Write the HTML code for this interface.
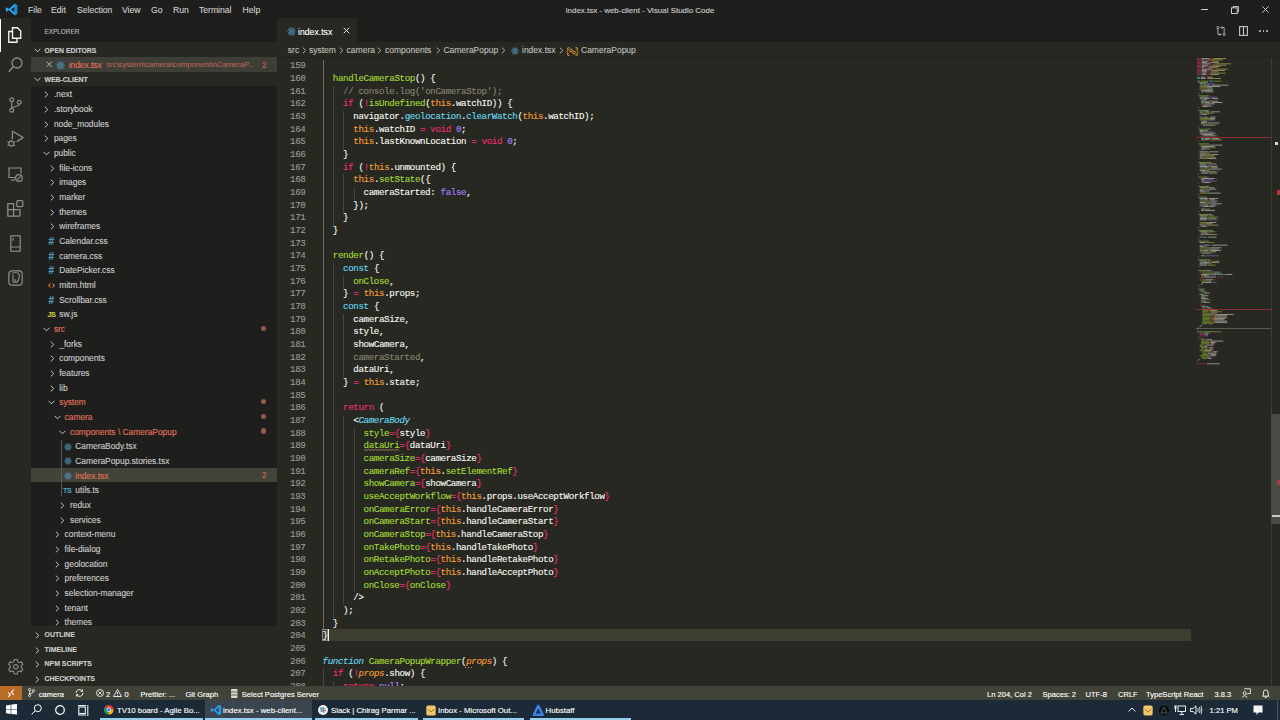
<!DOCTYPE html><html><head><meta charset="utf-8"><style>html,body{margin:0;padding:0;width:1280px;height:720px;overflow:hidden;background:#272822;position:relative;font-family:"Liberation Sans",sans-serif}div,span{box-sizing:border-box}div{-webkit-text-stroke:0.12px currentColor}svg{position:absolute;overflow:visible}</style></head><body>
<div style="position:absolute;left:0px;top:0px;width:1280px;height:18px;background:#1e1f1c;"></div>
<div style="position:absolute;left:0px;top:18px;width:31px;height:668px;background:#272822;"></div>
<div style="position:absolute;left:31px;top:18px;width:246px;height:24px;background:#1e1f1c;"></div>
<div style="position:absolute;left:31px;top:42px;width:246px;height:584px;background:#1e1f1c;"></div>
<div style="position:absolute;left:31px;top:626px;width:246px;height:60px;background:#272822;"></div>
<div style="position:absolute;left:277px;top:18px;width:1003px;height:24px;background:#1e1f1c;"></div>
<div style="position:absolute;left:277px;top:18px;width:80px;height:24px;background:#272822;"></div>
<div style="position:absolute;left:277px;top:42px;width:1003px;height:644px;background:#272822;"></div>
<div style="position:absolute;left:277px;top:56.8px;width:1003px;height:1.6px;background:#1f201c;"></div>
<div style="position:absolute;left:0px;top:686px;width:1280px;height:14px;background:#414339;"></div>
<div style="position:absolute;left:0px;top:700px;width:1280px;height:20px;background:#1c2a38;"></div>
<div style="position:absolute;left:204.8px;top:700px;width:107.2px;height:18.2px;background:#3b4550;"></div>
<div style="position:absolute;left:28px;top:4.28px;height:12.04px;line-height:12.04px;white-space:pre;color:#cccccc;font-size:8.6px;font-family:'Liberation Sans', sans-serif;">File</div>
<div style="position:absolute;left:51px;top:4.28px;height:12.04px;line-height:12.04px;white-space:pre;color:#cccccc;font-size:8.6px;font-family:'Liberation Sans', sans-serif;">Edit</div>
<div style="position:absolute;left:77px;top:4.28px;height:12.04px;line-height:12.04px;white-space:pre;color:#cccccc;font-size:8.6px;font-family:'Liberation Sans', sans-serif;">Selection</div>
<div style="position:absolute;left:122px;top:4.28px;height:12.04px;line-height:12.04px;white-space:pre;color:#cccccc;font-size:8.6px;font-family:'Liberation Sans', sans-serif;">View</div>
<div style="position:absolute;left:151px;top:4.28px;height:12.04px;line-height:12.04px;white-space:pre;color:#cccccc;font-size:8.6px;font-family:'Liberation Sans', sans-serif;">Go</div>
<div style="position:absolute;left:173px;top:4.28px;height:12.04px;line-height:12.04px;white-space:pre;color:#cccccc;font-size:8.6px;font-family:'Liberation Sans', sans-serif;">Run</div>
<div style="position:absolute;left:199px;top:4.28px;height:12.04px;line-height:12.04px;white-space:pre;color:#cccccc;font-size:8.6px;font-family:'Liberation Sans', sans-serif;">Terminal</div>
<div style="position:absolute;left:242.5px;top:4.28px;height:12.04px;line-height:12.04px;white-space:pre;color:#cccccc;font-size:8.6px;font-family:'Liberation Sans', sans-serif;">Help</div>
<div style="position:absolute;left:565.8px;top:4.54px;height:11.13px;line-height:11.13px;white-space:pre;color:#cccccc;font-size:7.95px;font-family:'Liberation Sans', sans-serif;">index.tsx - web-client - Visual Studio Code</div>
<div style="position:absolute;left:44.5px;top:27.72px;height:8.96px;line-height:8.96px;white-space:pre;color:#bbbbbb;font-size:6.4px;font-family:'Liberation Sans', sans-serif;">EXPLORER</div>
<div style="position:absolute;left:31px;top:42px;width:246px;height:14.6px;background:#272822;"></div>
<div style="position:absolute;left:31px;top:71.6px;width:246px;height:14.6px;background:#272822;"></div>
<div style="position:absolute;left:44.5px;top:46.17px;height:9.66px;line-height:9.66px;white-space:pre;color:#cccccc;font-size:6.9px;font-family:'Liberation Sans', sans-serif;font-weight:bold">OPEN EDITORS</div>
<div style="position:absolute;left:44.5px;top:74.87px;height:9.66px;line-height:9.66px;white-space:pre;color:#cccccc;font-size:6.9px;font-family:'Liberation Sans', sans-serif;font-weight:bold">WEB-CLIENT</div>
<div style="position:absolute;left:31px;top:56.8px;width:246px;height:14.8px;background:#3d3e37;"></div>
<div style="position:absolute;left:68.7px;top:59.82px;height:11.76px;line-height:11.76px;white-space:pre;color:#e2725b;font-size:8.4px;font-family:'Liberation Sans', sans-serif;">index.tsx</div>
<div style="position:absolute;left:106.2px;top:60.31px;height:10.78px;line-height:10.78px;white-space:pre;color:#b56356;font-size:7.7px;font-family:'Liberation Sans', sans-serif;">src\system\camera\components\CameraP...</div>
<div style="position:absolute;left:262px;top:59.96px;height:11.48px;line-height:11.48px;white-space:pre;color:#c9685a;font-size:8.2px;font-family:'Liberation Sans', sans-serif;">2</div>
<div style="position:absolute;left:53.9px;top:89.42px;height:11.76px;line-height:11.76px;white-space:pre;color:#cccccc;font-size:8.4px;font-family:'Liberation Sans', sans-serif;">.next</div>
<div style="position:absolute;left:53.9px;top:104.09px;height:11.76px;line-height:11.76px;white-space:pre;color:#cccccc;font-size:8.4px;font-family:'Liberation Sans', sans-serif;">.storybook</div>
<div style="position:absolute;left:53.9px;top:118.75px;height:11.76px;line-height:11.76px;white-space:pre;color:#cccccc;font-size:8.4px;font-family:'Liberation Sans', sans-serif;">node_modules</div>
<div style="position:absolute;left:53.9px;top:133.42px;height:11.76px;line-height:11.76px;white-space:pre;color:#cccccc;font-size:8.4px;font-family:'Liberation Sans', sans-serif;">pages</div>
<div style="position:absolute;left:53.9px;top:148.09px;height:11.76px;line-height:11.76px;white-space:pre;color:#cccccc;font-size:8.4px;font-family:'Liberation Sans', sans-serif;">public</div>
<div style="position:absolute;left:59.25px;top:162.75px;height:11.76px;line-height:11.76px;white-space:pre;color:#cccccc;font-size:8.4px;font-family:'Liberation Sans', sans-serif;">file-icons</div>
<div style="position:absolute;left:59.25px;top:177.42px;height:11.76px;line-height:11.76px;white-space:pre;color:#cccccc;font-size:8.4px;font-family:'Liberation Sans', sans-serif;">images</div>
<div style="position:absolute;left:59.25px;top:192.09px;height:11.76px;line-height:11.76px;white-space:pre;color:#cccccc;font-size:8.4px;font-family:'Liberation Sans', sans-serif;">marker</div>
<div style="position:absolute;left:59.25px;top:206.76px;height:11.76px;line-height:11.76px;white-space:pre;color:#cccccc;font-size:8.4px;font-family:'Liberation Sans', sans-serif;">themes</div>
<div style="position:absolute;left:59.25px;top:221.42px;height:11.76px;line-height:11.76px;white-space:pre;color:#cccccc;font-size:8.4px;font-family:'Liberation Sans', sans-serif;">wireframes</div>
<div style="position:absolute;left:59.25px;top:236.09px;height:11.76px;line-height:11.76px;white-space:pre;color:#cccccc;font-size:8.4px;font-family:'Liberation Sans', sans-serif;">Calendar.css</div>
<div style="position:absolute;left:59.25px;top:250.76px;height:11.76px;line-height:11.76px;white-space:pre;color:#cccccc;font-size:8.4px;font-family:'Liberation Sans', sans-serif;">camera.css</div>
<div style="position:absolute;left:59.25px;top:265.42px;height:11.76px;line-height:11.76px;white-space:pre;color:#cccccc;font-size:8.4px;font-family:'Liberation Sans', sans-serif;">DatePicker.css</div>
<div style="position:absolute;left:59.25px;top:280.09px;height:11.76px;line-height:11.76px;white-space:pre;color:#cccccc;font-size:8.4px;font-family:'Liberation Sans', sans-serif;">mitm.html</div>
<div style="position:absolute;left:59.25px;top:294.76px;height:11.76px;line-height:11.76px;white-space:pre;color:#cccccc;font-size:8.4px;font-family:'Liberation Sans', sans-serif;">Scrollbar.css</div>
<div style="position:absolute;left:59.25px;top:309.43px;height:11.76px;line-height:11.76px;white-space:pre;color:#cccccc;font-size:8.4px;font-family:'Liberation Sans', sans-serif;">sw.js</div>
<div style="position:absolute;left:53.9px;top:324.09px;height:11.76px;line-height:11.76px;white-space:pre;color:#e2725b;font-size:8.4px;font-family:'Liberation Sans', sans-serif;">src</div>
<div style="position:absolute;left:260.6px;top:325.57px;width:5.4px;height:5.4px;border-radius:50%;background:#96584f"></div>
<div style="position:absolute;left:59.25px;top:338.76px;height:11.76px;line-height:11.76px;white-space:pre;color:#cccccc;font-size:8.4px;font-family:'Liberation Sans', sans-serif;">_forks</div>
<div style="position:absolute;left:59.25px;top:353.43px;height:11.76px;line-height:11.76px;white-space:pre;color:#cccccc;font-size:8.4px;font-family:'Liberation Sans', sans-serif;">components</div>
<div style="position:absolute;left:59.25px;top:368.09px;height:11.76px;line-height:11.76px;white-space:pre;color:#cccccc;font-size:8.4px;font-family:'Liberation Sans', sans-serif;">features</div>
<div style="position:absolute;left:59.25px;top:382.76px;height:11.76px;line-height:11.76px;white-space:pre;color:#cccccc;font-size:8.4px;font-family:'Liberation Sans', sans-serif;">lib</div>
<div style="position:absolute;left:59.25px;top:397.43px;height:11.76px;line-height:11.76px;white-space:pre;color:#e2725b;font-size:8.4px;font-family:'Liberation Sans', sans-serif;">system</div>
<div style="position:absolute;left:260.6px;top:398.91px;width:5.4px;height:5.4px;border-radius:50%;background:#96584f"></div>
<div style="position:absolute;left:64.6px;top:412.09px;height:11.76px;line-height:11.76px;white-space:pre;color:#e2725b;font-size:8.4px;font-family:'Liberation Sans', sans-serif;">camera</div>
<div style="position:absolute;left:260.6px;top:413.57px;width:5.4px;height:5.4px;border-radius:50%;background:#96584f"></div>
<div style="position:absolute;left:69.94999999999999px;top:426.76px;height:11.76px;line-height:11.76px;white-space:pre;color:#e2725b;font-size:8.4px;font-family:'Liberation Sans', sans-serif;">components \ CameraPopup</div>
<div style="position:absolute;left:260.6px;top:428.24px;width:5.4px;height:5.4px;border-radius:50%;background:#96584f"></div>
<div style="position:absolute;left:75.3px;top:441.43px;height:11.76px;line-height:11.76px;white-space:pre;color:#cccccc;font-size:8.4px;font-family:'Liberation Sans', sans-serif;">CameraBody.tsx</div>
<div style="position:absolute;left:75.3px;top:456.10px;height:11.76px;line-height:11.76px;white-space:pre;color:#cccccc;font-size:8.4px;font-family:'Liberation Sans', sans-serif;">CameraPopup.stories.tsx</div>
<div style="position:absolute;left:31px;top:467.512px;width:246px;height:14.67px;background:#434439;"></div>
<div style="position:absolute;left:75.3px;top:470.76px;height:11.76px;line-height:11.76px;white-space:pre;color:#e2725b;font-size:8.4px;font-family:'Liberation Sans', sans-serif;">index.tsx</div>
<div style="position:absolute;left:262px;top:470.30px;height:11.48px;line-height:11.48px;white-space:pre;color:#d06a5a;font-size:8.2px;font-family:'Liberation Sans', sans-serif;">2</div>
<div style="position:absolute;left:75.3px;top:485.43px;height:11.76px;line-height:11.76px;white-space:pre;color:#cccccc;font-size:8.4px;font-family:'Liberation Sans', sans-serif;">utils.ts</div>
<div style="position:absolute;left:69.94999999999999px;top:500.10px;height:11.76px;line-height:11.76px;white-space:pre;color:#cccccc;font-size:8.4px;font-family:'Liberation Sans', sans-serif;">redux</div>
<div style="position:absolute;left:69.94999999999999px;top:514.76px;height:11.76px;line-height:11.76px;white-space:pre;color:#cccccc;font-size:8.4px;font-family:'Liberation Sans', sans-serif;">services</div>
<div style="position:absolute;left:64.6px;top:529.43px;height:11.76px;line-height:11.76px;white-space:pre;color:#cccccc;font-size:8.4px;font-family:'Liberation Sans', sans-serif;">context-menu</div>
<div style="position:absolute;left:64.6px;top:544.10px;height:11.76px;line-height:11.76px;white-space:pre;color:#cccccc;font-size:8.4px;font-family:'Liberation Sans', sans-serif;">file-dialog</div>
<div style="position:absolute;left:64.6px;top:558.76px;height:11.76px;line-height:11.76px;white-space:pre;color:#cccccc;font-size:8.4px;font-family:'Liberation Sans', sans-serif;">geolocation</div>
<div style="position:absolute;left:64.6px;top:573.43px;height:11.76px;line-height:11.76px;white-space:pre;color:#cccccc;font-size:8.4px;font-family:'Liberation Sans', sans-serif;">preferences</div>
<div style="position:absolute;left:64.6px;top:588.10px;height:11.76px;line-height:11.76px;white-space:pre;color:#cccccc;font-size:8.4px;font-family:'Liberation Sans', sans-serif;">selection-manager</div>
<div style="position:absolute;left:64.6px;top:602.77px;height:11.76px;line-height:11.76px;white-space:pre;color:#cccccc;font-size:8.4px;font-family:'Liberation Sans', sans-serif;">tenant</div>
<div style="position:absolute;left:64.6px;top:617.43px;height:11.76px;line-height:11.76px;white-space:pre;color:#cccccc;font-size:8.4px;font-family:'Liberation Sans', sans-serif;">themes</div>
<div style="position:absolute;left:44.5px;top:629.94px;height:9.73px;line-height:9.73px;white-space:pre;color:#cccccc;font-size:6.95px;font-family:'Liberation Sans', sans-serif;font-weight:bold">OUTLINE</div>
<div style="position:absolute;left:44.5px;top:644.60px;height:9.73px;line-height:9.73px;white-space:pre;color:#cccccc;font-size:6.95px;font-family:'Liberation Sans', sans-serif;font-weight:bold">TIMELINE</div>
<div style="position:absolute;left:44.5px;top:659.27px;height:9.73px;line-height:9.73px;white-space:pre;color:#cccccc;font-size:6.95px;font-family:'Liberation Sans', sans-serif;font-weight:bold">NPM SCRIPTS</div>
<div style="position:absolute;left:44.5px;top:673.94px;height:9.73px;line-height:9.73px;white-space:pre;color:#cccccc;font-size:6.95px;font-family:'Liberation Sans', sans-serif;font-weight:bold">CHECKPOINTS</div>
<div style="position:absolute;left:298px;top:25.91px;height:12.18px;line-height:12.18px;white-space:pre;color:#ffffff;font-size:8.7px;font-family:'Liberation Sans', sans-serif;">index.tsx</div>
<div style="position:absolute;left:287.8px;top:45.25px;height:11.90px;line-height:11.90px;white-space:pre;color:#bfbfba;font-size:8.5px;font-family:'Liberation Sans', sans-serif;">src</div>
<div style="position:absolute;left:309px;top:45.25px;height:11.90px;line-height:11.90px;white-space:pre;color:#bfbfba;font-size:8.5px;font-family:'Liberation Sans', sans-serif;">system</div>
<div style="position:absolute;left:346.6px;top:45.25px;height:11.90px;line-height:11.90px;white-space:pre;color:#bfbfba;font-size:8.5px;font-family:'Liberation Sans', sans-serif;">camera</div>
<div style="position:absolute;left:385px;top:45.25px;height:11.90px;line-height:11.90px;white-space:pre;color:#bfbfba;font-size:8.5px;font-family:'Liberation Sans', sans-serif;">components</div>
<div style="position:absolute;left:443.4px;top:45.25px;height:11.90px;line-height:11.90px;white-space:pre;color:#bfbfba;font-size:8.5px;font-family:'Liberation Sans', sans-serif;">CameraPopup</div>
<div style="position:absolute;left:522px;top:45.25px;height:11.90px;line-height:11.90px;white-space:pre;color:#bfbfba;font-size:8.5px;font-family:'Liberation Sans', sans-serif;">index.tsx</div>
<div style="position:absolute;left:581px;top:45.25px;height:11.90px;line-height:11.90px;white-space:pre;color:#bfbfba;font-size:8.5px;font-family:'Liberation Sans', sans-serif;">CameraPopup</div>
<svg style="position:absolute;left:301.5px;top:46.8px" width="5" height="7" viewBox="0 0 5 7"><path d="M0.8 0.6L3.8 3.5L0.8 6.4" fill="none" stroke="#bfbfba" stroke-width="0.9"/></svg>
<svg style="position:absolute;left:339px;top:46.8px" width="5" height="7" viewBox="0 0 5 7"><path d="M0.8 0.6L3.8 3.5L0.8 6.4" fill="none" stroke="#bfbfba" stroke-width="0.9"/></svg>
<svg style="position:absolute;left:377px;top:46.8px" width="5" height="7" viewBox="0 0 5 7"><path d="M0.8 0.6L3.8 3.5L0.8 6.4" fill="none" stroke="#bfbfba" stroke-width="0.9"/></svg>
<svg style="position:absolute;left:435.8px;top:46.8px" width="5" height="7" viewBox="0 0 5 7"><path d="M0.8 0.6L3.8 3.5L0.8 6.4" fill="none" stroke="#bfbfba" stroke-width="0.9"/></svg>
<svg style="position:absolute;left:500.5px;top:46.8px" width="5" height="7" viewBox="0 0 5 7"><path d="M0.8 0.6L3.8 3.5L0.8 6.4" fill="none" stroke="#bfbfba" stroke-width="0.9"/></svg>
<svg style="position:absolute;left:558.6px;top:46.8px" width="5" height="7" viewBox="0 0 5 7"><path d="M0.8 0.6L3.8 3.5L0.8 6.4" fill="none" stroke="#bfbfba" stroke-width="0.9"/></svg>
<div style="position:absolute;left:322px;top:628.7px;width:869px;height:12.6px;background:#3e3d32;"></div>
<div style="position:absolute;left:322.4px;top:628.9px;width:6px;height:12.2px;background:transparent;border:1px solid #8a8a84"></div>
<div style="position:absolute;left:327.6px;top:628.9px;width:1.4px;height:12.2px;background:#f0f0f0;"></div>
<div style="position:absolute;left:277px;top:57.5px;width:990px;height:628.5px;overflow:hidden">
<div style="position:absolute;left:45.80px;top:2.77px;width:1.3px;height:12.77px;background:#6b6c66"></div>
<div style="position:absolute;left:45.80px;top:15.43px;width:1.3px;height:12.77px;background:#6b6c66"></div>
<div style="position:absolute;left:45.80px;top:28.10px;width:1.3px;height:12.77px;background:#6b6c66"></div>
<div style="position:absolute;left:56.07px;top:28.10px;width:1.0px;height:12.77px;background:#45463f"></div>
<div style="position:absolute;left:45.80px;top:40.77px;width:1.3px;height:12.77px;background:#6b6c66"></div>
<div style="position:absolute;left:56.07px;top:40.77px;width:1.0px;height:12.77px;background:#45463f"></div>
<div style="position:absolute;left:45.80px;top:53.43px;width:1.3px;height:12.77px;background:#6b6c66"></div>
<div style="position:absolute;left:56.07px;top:53.43px;width:1.0px;height:12.77px;background:#45463f"></div>
<div style="position:absolute;left:66.33px;top:53.43px;width:1.0px;height:12.77px;background:#45463f"></div>
<div style="position:absolute;left:45.80px;top:66.10px;width:1.3px;height:12.77px;background:#6b6c66"></div>
<div style="position:absolute;left:56.07px;top:66.10px;width:1.0px;height:12.77px;background:#45463f"></div>
<div style="position:absolute;left:66.33px;top:66.10px;width:1.0px;height:12.77px;background:#45463f"></div>
<div style="position:absolute;left:45.80px;top:78.77px;width:1.3px;height:12.77px;background:#6b6c66"></div>
<div style="position:absolute;left:56.07px;top:78.77px;width:1.0px;height:12.77px;background:#45463f"></div>
<div style="position:absolute;left:66.33px;top:78.77px;width:1.0px;height:12.77px;background:#45463f"></div>
<div style="position:absolute;left:45.80px;top:91.44px;width:1.3px;height:12.77px;background:#6b6c66"></div>
<div style="position:absolute;left:56.07px;top:91.44px;width:1.0px;height:12.77px;background:#45463f"></div>
<div style="position:absolute;left:45.80px;top:104.10px;width:1.3px;height:12.77px;background:#6b6c66"></div>
<div style="position:absolute;left:56.07px;top:104.10px;width:1.0px;height:12.77px;background:#45463f"></div>
<div style="position:absolute;left:45.80px;top:116.77px;width:1.3px;height:12.77px;background:#6b6c66"></div>
<div style="position:absolute;left:56.07px;top:116.77px;width:1.0px;height:12.77px;background:#45463f"></div>
<div style="position:absolute;left:66.33px;top:116.77px;width:1.0px;height:12.77px;background:#45463f"></div>
<div style="position:absolute;left:45.80px;top:129.44px;width:1.3px;height:12.77px;background:#6b6c66"></div>
<div style="position:absolute;left:56.07px;top:129.44px;width:1.0px;height:12.77px;background:#45463f"></div>
<div style="position:absolute;left:66.33px;top:129.44px;width:1.0px;height:12.77px;background:#45463f"></div>
<div style="position:absolute;left:76.60px;top:129.44px;width:1.0px;height:12.77px;background:#45463f"></div>
<div style="position:absolute;left:45.80px;top:142.10px;width:1.3px;height:12.77px;background:#6b6c66"></div>
<div style="position:absolute;left:56.07px;top:142.10px;width:1.0px;height:12.77px;background:#45463f"></div>
<div style="position:absolute;left:66.33px;top:142.10px;width:1.0px;height:12.77px;background:#45463f"></div>
<div style="position:absolute;left:45.80px;top:154.77px;width:1.3px;height:12.77px;background:#6b6c66"></div>
<div style="position:absolute;left:56.07px;top:154.77px;width:1.0px;height:12.77px;background:#45463f"></div>
<div style="position:absolute;left:45.80px;top:167.44px;width:1.3px;height:12.77px;background:#6b6c66"></div>
<div style="position:absolute;left:45.80px;top:180.10px;width:1.3px;height:12.77px;background:#6b6c66"></div>
<div style="position:absolute;left:45.80px;top:192.77px;width:1.3px;height:12.77px;background:#6b6c66"></div>
<div style="position:absolute;left:45.80px;top:205.44px;width:1.3px;height:12.77px;background:#6b6c66"></div>
<div style="position:absolute;left:56.07px;top:205.44px;width:1.0px;height:12.77px;background:#45463f"></div>
<div style="position:absolute;left:45.80px;top:218.11px;width:1.3px;height:12.77px;background:#6b6c66"></div>
<div style="position:absolute;left:56.07px;top:218.11px;width:1.0px;height:12.77px;background:#45463f"></div>
<div style="position:absolute;left:66.33px;top:218.11px;width:1.0px;height:12.77px;background:#45463f"></div>
<div style="position:absolute;left:45.80px;top:230.77px;width:1.3px;height:12.77px;background:#6b6c66"></div>
<div style="position:absolute;left:56.07px;top:230.77px;width:1.0px;height:12.77px;background:#45463f"></div>
<div style="position:absolute;left:45.80px;top:243.44px;width:1.3px;height:12.77px;background:#6b6c66"></div>
<div style="position:absolute;left:56.07px;top:243.44px;width:1.0px;height:12.77px;background:#45463f"></div>
<div style="position:absolute;left:45.80px;top:256.11px;width:1.3px;height:12.77px;background:#6b6c66"></div>
<div style="position:absolute;left:56.07px;top:256.11px;width:1.0px;height:12.77px;background:#45463f"></div>
<div style="position:absolute;left:66.33px;top:256.11px;width:1.0px;height:12.77px;background:#45463f"></div>
<div style="position:absolute;left:45.80px;top:268.77px;width:1.3px;height:12.77px;background:#6b6c66"></div>
<div style="position:absolute;left:56.07px;top:268.77px;width:1.0px;height:12.77px;background:#45463f"></div>
<div style="position:absolute;left:66.33px;top:268.77px;width:1.0px;height:12.77px;background:#45463f"></div>
<div style="position:absolute;left:45.80px;top:281.44px;width:1.3px;height:12.77px;background:#6b6c66"></div>
<div style="position:absolute;left:56.07px;top:281.44px;width:1.0px;height:12.77px;background:#45463f"></div>
<div style="position:absolute;left:66.33px;top:281.44px;width:1.0px;height:12.77px;background:#45463f"></div>
<div style="position:absolute;left:45.80px;top:294.11px;width:1.3px;height:12.77px;background:#6b6c66"></div>
<div style="position:absolute;left:56.07px;top:294.11px;width:1.0px;height:12.77px;background:#45463f"></div>
<div style="position:absolute;left:66.33px;top:294.11px;width:1.0px;height:12.77px;background:#45463f"></div>
<div style="position:absolute;left:45.80px;top:306.77px;width:1.3px;height:12.77px;background:#6b6c66"></div>
<div style="position:absolute;left:56.07px;top:306.77px;width:1.0px;height:12.77px;background:#45463f"></div>
<div style="position:absolute;left:66.33px;top:306.77px;width:1.0px;height:12.77px;background:#45463f"></div>
<div style="position:absolute;left:45.80px;top:319.44px;width:1.3px;height:12.77px;background:#6b6c66"></div>
<div style="position:absolute;left:56.07px;top:319.44px;width:1.0px;height:12.77px;background:#45463f"></div>
<div style="position:absolute;left:45.80px;top:332.11px;width:1.3px;height:12.77px;background:#6b6c66"></div>
<div style="position:absolute;left:56.07px;top:332.11px;width:1.0px;height:12.77px;background:#45463f"></div>
<div style="position:absolute;left:45.80px;top:344.78px;width:1.3px;height:12.77px;background:#6b6c66"></div>
<div style="position:absolute;left:56.07px;top:344.78px;width:1.0px;height:12.77px;background:#45463f"></div>
<div style="position:absolute;left:45.80px;top:357.44px;width:1.3px;height:12.77px;background:#6b6c66"></div>
<div style="position:absolute;left:56.07px;top:357.44px;width:1.0px;height:12.77px;background:#45463f"></div>
<div style="position:absolute;left:66.33px;top:357.44px;width:1.0px;height:12.77px;background:#45463f"></div>
<div style="position:absolute;left:45.80px;top:370.11px;width:1.3px;height:12.77px;background:#6b6c66"></div>
<div style="position:absolute;left:56.07px;top:370.11px;width:1.0px;height:12.77px;background:#45463f"></div>
<div style="position:absolute;left:66.33px;top:370.11px;width:1.0px;height:12.77px;background:#45463f"></div>
<div style="position:absolute;left:76.60px;top:370.11px;width:1.0px;height:12.77px;background:#45463f"></div>
<div style="position:absolute;left:45.80px;top:382.78px;width:1.3px;height:12.77px;background:#6b6c66"></div>
<div style="position:absolute;left:56.07px;top:382.78px;width:1.0px;height:12.77px;background:#45463f"></div>
<div style="position:absolute;left:66.33px;top:382.78px;width:1.0px;height:12.77px;background:#45463f"></div>
<div style="position:absolute;left:76.60px;top:382.78px;width:1.0px;height:12.77px;background:#45463f"></div>
<div style="position:absolute;left:45.80px;top:395.44px;width:1.3px;height:12.77px;background:#6b6c66"></div>
<div style="position:absolute;left:56.07px;top:395.44px;width:1.0px;height:12.77px;background:#45463f"></div>
<div style="position:absolute;left:66.33px;top:395.44px;width:1.0px;height:12.77px;background:#45463f"></div>
<div style="position:absolute;left:76.60px;top:395.44px;width:1.0px;height:12.77px;background:#45463f"></div>
<div style="position:absolute;left:45.80px;top:408.11px;width:1.3px;height:12.77px;background:#6b6c66"></div>
<div style="position:absolute;left:56.07px;top:408.11px;width:1.0px;height:12.77px;background:#45463f"></div>
<div style="position:absolute;left:66.33px;top:408.11px;width:1.0px;height:12.77px;background:#45463f"></div>
<div style="position:absolute;left:76.60px;top:408.11px;width:1.0px;height:12.77px;background:#45463f"></div>
<div style="position:absolute;left:45.80px;top:420.78px;width:1.3px;height:12.77px;background:#6b6c66"></div>
<div style="position:absolute;left:56.07px;top:420.78px;width:1.0px;height:12.77px;background:#45463f"></div>
<div style="position:absolute;left:66.33px;top:420.78px;width:1.0px;height:12.77px;background:#45463f"></div>
<div style="position:absolute;left:76.60px;top:420.78px;width:1.0px;height:12.77px;background:#45463f"></div>
<div style="position:absolute;left:45.80px;top:433.44px;width:1.3px;height:12.77px;background:#6b6c66"></div>
<div style="position:absolute;left:56.07px;top:433.44px;width:1.0px;height:12.77px;background:#45463f"></div>
<div style="position:absolute;left:66.33px;top:433.44px;width:1.0px;height:12.77px;background:#45463f"></div>
<div style="position:absolute;left:76.60px;top:433.44px;width:1.0px;height:12.77px;background:#45463f"></div>
<div style="position:absolute;left:45.80px;top:446.11px;width:1.3px;height:12.77px;background:#6b6c66"></div>
<div style="position:absolute;left:56.07px;top:446.11px;width:1.0px;height:12.77px;background:#45463f"></div>
<div style="position:absolute;left:66.33px;top:446.11px;width:1.0px;height:12.77px;background:#45463f"></div>
<div style="position:absolute;left:76.60px;top:446.11px;width:1.0px;height:12.77px;background:#45463f"></div>
<div style="position:absolute;left:45.80px;top:458.78px;width:1.3px;height:12.77px;background:#6b6c66"></div>
<div style="position:absolute;left:56.07px;top:458.78px;width:1.0px;height:12.77px;background:#45463f"></div>
<div style="position:absolute;left:66.33px;top:458.78px;width:1.0px;height:12.77px;background:#45463f"></div>
<div style="position:absolute;left:76.60px;top:458.78px;width:1.0px;height:12.77px;background:#45463f"></div>
<div style="position:absolute;left:45.80px;top:471.45px;width:1.3px;height:12.77px;background:#6b6c66"></div>
<div style="position:absolute;left:56.07px;top:471.45px;width:1.0px;height:12.77px;background:#45463f"></div>
<div style="position:absolute;left:66.33px;top:471.45px;width:1.0px;height:12.77px;background:#45463f"></div>
<div style="position:absolute;left:76.60px;top:471.45px;width:1.0px;height:12.77px;background:#45463f"></div>
<div style="position:absolute;left:45.80px;top:484.11px;width:1.3px;height:12.77px;background:#6b6c66"></div>
<div style="position:absolute;left:56.07px;top:484.11px;width:1.0px;height:12.77px;background:#45463f"></div>
<div style="position:absolute;left:66.33px;top:484.11px;width:1.0px;height:12.77px;background:#45463f"></div>
<div style="position:absolute;left:76.60px;top:484.11px;width:1.0px;height:12.77px;background:#45463f"></div>
<div style="position:absolute;left:45.80px;top:496.78px;width:1.3px;height:12.77px;background:#6b6c66"></div>
<div style="position:absolute;left:56.07px;top:496.78px;width:1.0px;height:12.77px;background:#45463f"></div>
<div style="position:absolute;left:66.33px;top:496.78px;width:1.0px;height:12.77px;background:#45463f"></div>
<div style="position:absolute;left:76.60px;top:496.78px;width:1.0px;height:12.77px;background:#45463f"></div>
<div style="position:absolute;left:45.80px;top:509.45px;width:1.3px;height:12.77px;background:#6b6c66"></div>
<div style="position:absolute;left:56.07px;top:509.45px;width:1.0px;height:12.77px;background:#45463f"></div>
<div style="position:absolute;left:66.33px;top:509.45px;width:1.0px;height:12.77px;background:#45463f"></div>
<div style="position:absolute;left:76.60px;top:509.45px;width:1.0px;height:12.77px;background:#45463f"></div>
<div style="position:absolute;left:45.80px;top:522.11px;width:1.3px;height:12.77px;background:#6b6c66"></div>
<div style="position:absolute;left:56.07px;top:522.11px;width:1.0px;height:12.77px;background:#45463f"></div>
<div style="position:absolute;left:66.33px;top:522.11px;width:1.0px;height:12.77px;background:#45463f"></div>
<div style="position:absolute;left:76.60px;top:522.11px;width:1.0px;height:12.77px;background:#45463f"></div>
<div style="position:absolute;left:45.80px;top:534.78px;width:1.3px;height:12.77px;background:#6b6c66"></div>
<div style="position:absolute;left:56.07px;top:534.78px;width:1.0px;height:12.77px;background:#45463f"></div>
<div style="position:absolute;left:66.33px;top:534.78px;width:1.0px;height:12.77px;background:#45463f"></div>
<div style="position:absolute;left:45.80px;top:547.45px;width:1.3px;height:12.77px;background:#6b6c66"></div>
<div style="position:absolute;left:56.07px;top:547.45px;width:1.0px;height:12.77px;background:#45463f"></div>
<div style="position:absolute;left:45.80px;top:560.11px;width:1.3px;height:12.77px;background:#6b6c66"></div>
<div style="position:absolute;left:45.80px;top:610.78px;width:1.0px;height:12.77px;background:#45463f"></div>
<div style="position:absolute;left:45.80px;top:623.45px;width:1.0px;height:12.77px;background:#45463f"></div>
<div style="position:absolute;left:56.07px;top:623.45px;width:1.0px;height:12.77px;background:#45463f"></div>
<div style="position:absolute;left:13px;top:2.77px;width:15.3px;text-align:right;height:12.667px;line-height:12.667px;font-family:'Liberation Mono',monospace;font-size:9.2px;letter-spacing:-0.387px;color:#9a9a94">159</div>
<div style="position:absolute;left:45.60000000000002px;top:2.77px;height:12.667px;line-height:12.667px;white-space:pre;font-family:'Liberation Mono',monospace;font-size:9.2px;letter-spacing:-0.387px;color:#f8f8f2"></div>
<div style="position:absolute;left:13px;top:15.43px;width:15.3px;text-align:right;height:12.667px;line-height:12.667px;font-family:'Liberation Mono',monospace;font-size:9.2px;letter-spacing:-0.387px;color:#9a9a94">160</div>
<div style="position:absolute;left:45.60000000000002px;top:15.43px;height:12.667px;line-height:12.667px;white-space:pre;font-family:'Liberation Mono',monospace;font-size:9.2px;letter-spacing:-0.387px;color:#f8f8f2"><span style="color:#f8f8f2;">  </span><span style="color:#a4dc34;">handleCameraStop</span><span style="color:#f8f8f2;">() {</span></div>
<div style="position:absolute;left:13px;top:28.10px;width:15.3px;text-align:right;height:12.667px;line-height:12.667px;font-family:'Liberation Mono',monospace;font-size:9.2px;letter-spacing:-0.387px;color:#9a9a94">161</div>
<div style="position:absolute;left:45.60000000000002px;top:28.10px;height:12.667px;line-height:12.667px;white-space:pre;font-family:'Liberation Mono',monospace;font-size:9.2px;letter-spacing:-0.387px;color:#f8f8f2"><span style="color:#f8f8f2;">    </span><span style="color:#88846f;">// console.log('onCameraStop');</span></div>
<div style="position:absolute;left:13px;top:40.77px;width:15.3px;text-align:right;height:12.667px;line-height:12.667px;font-family:'Liberation Mono',monospace;font-size:9.2px;letter-spacing:-0.387px;color:#9a9a94">162</div>
<div style="position:absolute;left:45.60000000000002px;top:40.77px;height:12.667px;line-height:12.667px;white-space:pre;font-family:'Liberation Mono',monospace;font-size:9.2px;letter-spacing:-0.387px;color:#f8f8f2"><span style="color:#f8f8f2;">    </span><span style="color:#ec2f6e;">if</span><span style="color:#f8f8f2;"> (</span><span style="color:#ec2f6e;">!</span><span style="color:#a4dc34;">isUndefined</span><span style="color:#f8f8f2;">(</span><span style="color:#f69f32;">this</span><span style="color:#f8f8f2;">.watchID)) {</span></div>
<div style="position:absolute;left:13px;top:53.43px;width:15.3px;text-align:right;height:12.667px;line-height:12.667px;font-family:'Liberation Mono',monospace;font-size:9.2px;letter-spacing:-0.387px;color:#9a9a94">163</div>
<div style="position:absolute;left:45.60000000000002px;top:53.43px;height:12.667px;line-height:12.667px;white-space:pre;font-family:'Liberation Mono',monospace;font-size:9.2px;letter-spacing:-0.387px;color:#f8f8f2"><span style="color:#f8f8f2;">      navigator.</span><span style="color:#66d9ef;">geolocation</span><span style="color:#f8f8f2;">.</span><span style="color:#66d9ef;">clearWatch</span><span style="color:#f8f8f2;">(</span><span style="color:#f69f32;">this</span><span style="color:#f8f8f2;">.watchID);</span></div>
<div style="position:absolute;left:13px;top:66.10px;width:15.3px;text-align:right;height:12.667px;line-height:12.667px;font-family:'Liberation Mono',monospace;font-size:9.2px;letter-spacing:-0.387px;color:#9a9a94">164</div>
<div style="position:absolute;left:45.60000000000002px;top:66.10px;height:12.667px;line-height:12.667px;white-space:pre;font-family:'Liberation Mono',monospace;font-size:9.2px;letter-spacing:-0.387px;color:#f8f8f2"><span style="color:#f8f8f2;">      </span><span style="color:#f69f32;">this</span><span style="color:#f8f8f2;">.watchID </span><span style="color:#ec2f6e;">=</span><span style="color:#f8f8f2;"> </span><span style="color:#ec2f6e;">void</span><span style="color:#f8f8f2;"> </span><span style="color:#ae81ff;">0</span><span style="color:#f8f8f2;">;</span></div>
<div style="position:absolute;left:13px;top:78.77px;width:15.3px;text-align:right;height:12.667px;line-height:12.667px;font-family:'Liberation Mono',monospace;font-size:9.2px;letter-spacing:-0.387px;color:#9a9a94">165</div>
<div style="position:absolute;left:45.60000000000002px;top:78.77px;height:12.667px;line-height:12.667px;white-space:pre;font-family:'Liberation Mono',monospace;font-size:9.2px;letter-spacing:-0.387px;color:#f8f8f2"><span style="color:#f8f8f2;">      </span><span style="color:#f69f32;">this</span><span style="color:#f8f8f2;">.lastKnownLocation </span><span style="color:#ec2f6e;">=</span><span style="color:#f8f8f2;"> </span><span style="color:#ec2f6e;">void</span><span style="color:#f8f8f2;"> </span><span style="color:#ae81ff;">0</span><span style="color:#f8f8f2;">;</span></div>
<div style="position:absolute;left:13px;top:91.44px;width:15.3px;text-align:right;height:12.667px;line-height:12.667px;font-family:'Liberation Mono',monospace;font-size:9.2px;letter-spacing:-0.387px;color:#9a9a94">166</div>
<div style="position:absolute;left:45.60000000000002px;top:91.44px;height:12.667px;line-height:12.667px;white-space:pre;font-family:'Liberation Mono',monospace;font-size:9.2px;letter-spacing:-0.387px;color:#f8f8f2"><span style="color:#f8f8f2;">    }</span></div>
<div style="position:absolute;left:13px;top:104.10px;width:15.3px;text-align:right;height:12.667px;line-height:12.667px;font-family:'Liberation Mono',monospace;font-size:9.2px;letter-spacing:-0.387px;color:#9a9a94">167</div>
<div style="position:absolute;left:45.60000000000002px;top:104.10px;height:12.667px;line-height:12.667px;white-space:pre;font-family:'Liberation Mono',monospace;font-size:9.2px;letter-spacing:-0.387px;color:#f8f8f2"><span style="color:#f8f8f2;">    </span><span style="color:#ec2f6e;">if</span><span style="color:#f8f8f2;"> (</span><span style="color:#ec2f6e;">!</span><span style="color:#f69f32;">this</span><span style="color:#f8f8f2;">.unmounted) {</span></div>
<div style="position:absolute;left:13px;top:116.77px;width:15.3px;text-align:right;height:12.667px;line-height:12.667px;font-family:'Liberation Mono',monospace;font-size:9.2px;letter-spacing:-0.387px;color:#9a9a94">168</div>
<div style="position:absolute;left:45.60000000000002px;top:116.77px;height:12.667px;line-height:12.667px;white-space:pre;font-family:'Liberation Mono',monospace;font-size:9.2px;letter-spacing:-0.387px;color:#f8f8f2"><span style="color:#f8f8f2;">      </span><span style="color:#f69f32;">this</span><span style="color:#f8f8f2;">.</span><span style="color:#a4dc34;">setState</span><span style="color:#f8f8f2;">({</span></div>
<div style="position:absolute;left:13px;top:129.44px;width:15.3px;text-align:right;height:12.667px;line-height:12.667px;font-family:'Liberation Mono',monospace;font-size:9.2px;letter-spacing:-0.387px;color:#9a9a94">169</div>
<div style="position:absolute;left:45.60000000000002px;top:129.44px;height:12.667px;line-height:12.667px;white-space:pre;font-family:'Liberation Mono',monospace;font-size:9.2px;letter-spacing:-0.387px;color:#f8f8f2"><span style="color:#f8f8f2;">        cameraStarted: </span><span style="color:#ae81ff;">false</span><span style="color:#f8f8f2;">,</span></div>
<div style="position:absolute;left:13px;top:142.10px;width:15.3px;text-align:right;height:12.667px;line-height:12.667px;font-family:'Liberation Mono',monospace;font-size:9.2px;letter-spacing:-0.387px;color:#9a9a94">170</div>
<div style="position:absolute;left:45.60000000000002px;top:142.10px;height:12.667px;line-height:12.667px;white-space:pre;font-family:'Liberation Mono',monospace;font-size:9.2px;letter-spacing:-0.387px;color:#f8f8f2"><span style="color:#f8f8f2;">      });</span></div>
<div style="position:absolute;left:13px;top:154.77px;width:15.3px;text-align:right;height:12.667px;line-height:12.667px;font-family:'Liberation Mono',monospace;font-size:9.2px;letter-spacing:-0.387px;color:#9a9a94">171</div>
<div style="position:absolute;left:45.60000000000002px;top:154.77px;height:12.667px;line-height:12.667px;white-space:pre;font-family:'Liberation Mono',monospace;font-size:9.2px;letter-spacing:-0.387px;color:#f8f8f2"><span style="color:#f8f8f2;">    }</span></div>
<div style="position:absolute;left:13px;top:167.44px;width:15.3px;text-align:right;height:12.667px;line-height:12.667px;font-family:'Liberation Mono',monospace;font-size:9.2px;letter-spacing:-0.387px;color:#9a9a94">172</div>
<div style="position:absolute;left:45.60000000000002px;top:167.44px;height:12.667px;line-height:12.667px;white-space:pre;font-family:'Liberation Mono',monospace;font-size:9.2px;letter-spacing:-0.387px;color:#f8f8f2"><span style="color:#f8f8f2;">  }</span></div>
<div style="position:absolute;left:13px;top:180.10px;width:15.3px;text-align:right;height:12.667px;line-height:12.667px;font-family:'Liberation Mono',monospace;font-size:9.2px;letter-spacing:-0.387px;color:#9a9a94">173</div>
<div style="position:absolute;left:45.60000000000002px;top:180.10px;height:12.667px;line-height:12.667px;white-space:pre;font-family:'Liberation Mono',monospace;font-size:9.2px;letter-spacing:-0.387px;color:#f8f8f2"></div>
<div style="position:absolute;left:13px;top:192.77px;width:15.3px;text-align:right;height:12.667px;line-height:12.667px;font-family:'Liberation Mono',monospace;font-size:9.2px;letter-spacing:-0.387px;color:#9a9a94">174</div>
<div style="position:absolute;left:45.60000000000002px;top:192.77px;height:12.667px;line-height:12.667px;white-space:pre;font-family:'Liberation Mono',monospace;font-size:9.2px;letter-spacing:-0.387px;color:#f8f8f2"><span style="color:#f8f8f2;">  </span><span style="color:#a4dc34;">render</span><span style="color:#f8f8f2;">() {</span></div>
<div style="position:absolute;left:13px;top:205.44px;width:15.3px;text-align:right;height:12.667px;line-height:12.667px;font-family:'Liberation Mono',monospace;font-size:9.2px;letter-spacing:-0.387px;color:#9a9a94">175</div>
<div style="position:absolute;left:45.60000000000002px;top:205.44px;height:12.667px;line-height:12.667px;white-space:pre;font-family:'Liberation Mono',monospace;font-size:9.2px;letter-spacing:-0.387px;color:#f8f8f2"><span style="color:#f8f8f2;">    </span><span style="color:#66d9ef;">const</span><span style="color:#f8f8f2;"> {</span></div>
<div style="position:absolute;left:13px;top:218.11px;width:15.3px;text-align:right;height:12.667px;line-height:12.667px;font-family:'Liberation Mono',monospace;font-size:9.2px;letter-spacing:-0.387px;color:#9a9a94">176</div>
<div style="position:absolute;left:45.60000000000002px;top:218.11px;height:12.667px;line-height:12.667px;white-space:pre;font-family:'Liberation Mono',monospace;font-size:9.2px;letter-spacing:-0.387px;color:#f8f8f2"><span style="color:#f8f8f2;">      </span><span style="color:#a4dc34;">onClose</span><span style="color:#f8f8f2;">,</span></div>
<div style="position:absolute;left:13px;top:230.77px;width:15.3px;text-align:right;height:12.667px;line-height:12.667px;font-family:'Liberation Mono',monospace;font-size:9.2px;letter-spacing:-0.387px;color:#9a9a94">177</div>
<div style="position:absolute;left:45.60000000000002px;top:230.77px;height:12.667px;line-height:12.667px;white-space:pre;font-family:'Liberation Mono',monospace;font-size:9.2px;letter-spacing:-0.387px;color:#f8f8f2"><span style="color:#f8f8f2;">    } </span><span style="color:#ec2f6e;">=</span><span style="color:#f8f8f2;"> </span><span style="color:#f69f32;">this</span><span style="color:#f8f8f2;">.props;</span></div>
<div style="position:absolute;left:13px;top:243.44px;width:15.3px;text-align:right;height:12.667px;line-height:12.667px;font-family:'Liberation Mono',monospace;font-size:9.2px;letter-spacing:-0.387px;color:#9a9a94">178</div>
<div style="position:absolute;left:45.60000000000002px;top:243.44px;height:12.667px;line-height:12.667px;white-space:pre;font-family:'Liberation Mono',monospace;font-size:9.2px;letter-spacing:-0.387px;color:#f8f8f2"><span style="color:#f8f8f2;">    </span><span style="color:#66d9ef;">const</span><span style="color:#f8f8f2;"> {</span></div>
<div style="position:absolute;left:13px;top:256.11px;width:15.3px;text-align:right;height:12.667px;line-height:12.667px;font-family:'Liberation Mono',monospace;font-size:9.2px;letter-spacing:-0.387px;color:#9a9a94">179</div>
<div style="position:absolute;left:45.60000000000002px;top:256.11px;height:12.667px;line-height:12.667px;white-space:pre;font-family:'Liberation Mono',monospace;font-size:9.2px;letter-spacing:-0.387px;color:#f8f8f2"><span style="color:#f8f8f2;">      cameraSize,</span></div>
<div style="position:absolute;left:13px;top:268.77px;width:15.3px;text-align:right;height:12.667px;line-height:12.667px;font-family:'Liberation Mono',monospace;font-size:9.2px;letter-spacing:-0.387px;color:#9a9a94">180</div>
<div style="position:absolute;left:45.60000000000002px;top:268.77px;height:12.667px;line-height:12.667px;white-space:pre;font-family:'Liberation Mono',monospace;font-size:9.2px;letter-spacing:-0.387px;color:#f8f8f2"><span style="color:#f8f8f2;">      style,</span></div>
<div style="position:absolute;left:13px;top:281.44px;width:15.3px;text-align:right;height:12.667px;line-height:12.667px;font-family:'Liberation Mono',monospace;font-size:9.2px;letter-spacing:-0.387px;color:#9a9a94">181</div>
<div style="position:absolute;left:45.60000000000002px;top:281.44px;height:12.667px;line-height:12.667px;white-space:pre;font-family:'Liberation Mono',monospace;font-size:9.2px;letter-spacing:-0.387px;color:#f8f8f2"><span style="color:#f8f8f2;">      showCamera,</span></div>
<div style="position:absolute;left:13px;top:294.11px;width:15.3px;text-align:right;height:12.667px;line-height:12.667px;font-family:'Liberation Mono',monospace;font-size:9.2px;letter-spacing:-0.387px;color:#9a9a94">182</div>
<div style="position:absolute;left:45.60000000000002px;top:294.11px;height:12.667px;line-height:12.667px;white-space:pre;font-family:'Liberation Mono',monospace;font-size:9.2px;letter-spacing:-0.387px;color:#f8f8f2"><span style="color:#f8f8f2;">      </span><span style="color:#88846f;">cameraStarted</span><span style="color:#f8f8f2;">,</span></div>
<div style="position:absolute;left:13px;top:306.77px;width:15.3px;text-align:right;height:12.667px;line-height:12.667px;font-family:'Liberation Mono',monospace;font-size:9.2px;letter-spacing:-0.387px;color:#9a9a94">183</div>
<div style="position:absolute;left:45.60000000000002px;top:306.77px;height:12.667px;line-height:12.667px;white-space:pre;font-family:'Liberation Mono',monospace;font-size:9.2px;letter-spacing:-0.387px;color:#f8f8f2"><span style="color:#f8f8f2;">      dataUri,</span></div>
<div style="position:absolute;left:13px;top:319.44px;width:15.3px;text-align:right;height:12.667px;line-height:12.667px;font-family:'Liberation Mono',monospace;font-size:9.2px;letter-spacing:-0.387px;color:#9a9a94">184</div>
<div style="position:absolute;left:45.60000000000002px;top:319.44px;height:12.667px;line-height:12.667px;white-space:pre;font-family:'Liberation Mono',monospace;font-size:9.2px;letter-spacing:-0.387px;color:#f8f8f2"><span style="color:#f8f8f2;">    } </span><span style="color:#ec2f6e;">=</span><span style="color:#f8f8f2;"> </span><span style="color:#f69f32;">this</span><span style="color:#f8f8f2;">.state;</span></div>
<div style="position:absolute;left:13px;top:332.11px;width:15.3px;text-align:right;height:12.667px;line-height:12.667px;font-family:'Liberation Mono',monospace;font-size:9.2px;letter-spacing:-0.387px;color:#9a9a94">185</div>
<div style="position:absolute;left:45.60000000000002px;top:332.11px;height:12.667px;line-height:12.667px;white-space:pre;font-family:'Liberation Mono',monospace;font-size:9.2px;letter-spacing:-0.387px;color:#f8f8f2"></div>
<div style="position:absolute;left:13px;top:344.78px;width:15.3px;text-align:right;height:12.667px;line-height:12.667px;font-family:'Liberation Mono',monospace;font-size:9.2px;letter-spacing:-0.387px;color:#9a9a94">186</div>
<div style="position:absolute;left:45.60000000000002px;top:344.78px;height:12.667px;line-height:12.667px;white-space:pre;font-family:'Liberation Mono',monospace;font-size:9.2px;letter-spacing:-0.387px;color:#f8f8f2"><span style="color:#f8f8f2;">    </span><span style="color:#ec2f6e;">return</span><span style="color:#f8f8f2;"> (</span></div>
<div style="position:absolute;left:13px;top:357.44px;width:15.3px;text-align:right;height:12.667px;line-height:12.667px;font-family:'Liberation Mono',monospace;font-size:9.2px;letter-spacing:-0.387px;color:#9a9a94">187</div>
<div style="position:absolute;left:45.60000000000002px;top:357.44px;height:12.667px;line-height:12.667px;white-space:pre;font-family:'Liberation Mono',monospace;font-size:9.2px;letter-spacing:-0.387px;color:#f8f8f2"><span style="color:#f8f8f2;">      &lt;</span><span style="color:#66d9ef;font-style:italic;">CameraBody</span></div>
<div style="position:absolute;left:13px;top:370.11px;width:15.3px;text-align:right;height:12.667px;line-height:12.667px;font-family:'Liberation Mono',monospace;font-size:9.2px;letter-spacing:-0.387px;color:#9a9a94">188</div>
<div style="position:absolute;left:45.60000000000002px;top:370.11px;height:12.667px;line-height:12.667px;white-space:pre;font-family:'Liberation Mono',monospace;font-size:9.2px;letter-spacing:-0.387px;color:#f8f8f2"><span style="color:#f8f8f2;">        </span><span style="color:#a4dc34;">style</span><span style="color:#ec2f6e;">=</span><span style="color:#ec2f6e;">{</span><span style="color:#f8f8f2;">style</span><span style="color:#ec2f6e;">}</span></div>
<div style="position:absolute;left:13px;top:382.78px;width:15.3px;text-align:right;height:12.667px;line-height:12.667px;font-family:'Liberation Mono',monospace;font-size:9.2px;letter-spacing:-0.387px;color:#9a9a94">189</div>
<div style="position:absolute;left:45.60000000000002px;top:382.78px;height:12.667px;line-height:12.667px;white-space:pre;font-family:'Liberation Mono',monospace;font-size:9.2px;letter-spacing:-0.387px;color:#f8f8f2"><span style="color:#f8f8f2;">        </span><span style="color:#a4dc34;">dataUri</span><span style="color:#ec2f6e;">=</span><span style="color:#ec2f6e;">{</span><span style="color:#f8f8f2;">dataUri</span><span style="color:#ec2f6e;">}</span></div>
<div style="position:absolute;left:13px;top:395.44px;width:15.3px;text-align:right;height:12.667px;line-height:12.667px;font-family:'Liberation Mono',monospace;font-size:9.2px;letter-spacing:-0.387px;color:#9a9a94">190</div>
<div style="position:absolute;left:45.60000000000002px;top:395.44px;height:12.667px;line-height:12.667px;white-space:pre;font-family:'Liberation Mono',monospace;font-size:9.2px;letter-spacing:-0.387px;color:#f8f8f2"><span style="color:#f8f8f2;">        </span><span style="color:#a4dc34;">cameraSize</span><span style="color:#ec2f6e;">=</span><span style="color:#ec2f6e;">{</span><span style="color:#f8f8f2;">cameraSize</span><span style="color:#ec2f6e;">}</span></div>
<div style="position:absolute;left:13px;top:408.11px;width:15.3px;text-align:right;height:12.667px;line-height:12.667px;font-family:'Liberation Mono',monospace;font-size:9.2px;letter-spacing:-0.387px;color:#9a9a94">191</div>
<div style="position:absolute;left:45.60000000000002px;top:408.11px;height:12.667px;line-height:12.667px;white-space:pre;font-family:'Liberation Mono',monospace;font-size:9.2px;letter-spacing:-0.387px;color:#f8f8f2"><span style="color:#f8f8f2;">        </span><span style="color:#a4dc34;">cameraRef</span><span style="color:#ec2f6e;">=</span><span style="color:#ec2f6e;">{</span><span style="color:#f69f32;">this</span><span style="color:#f8f8f2;">.</span><span style="color:#a4dc34;">setElementRef</span><span style="color:#ec2f6e;">}</span></div>
<div style="position:absolute;left:13px;top:420.78px;width:15.3px;text-align:right;height:12.667px;line-height:12.667px;font-family:'Liberation Mono',monospace;font-size:9.2px;letter-spacing:-0.387px;color:#9a9a94">192</div>
<div style="position:absolute;left:45.60000000000002px;top:420.78px;height:12.667px;line-height:12.667px;white-space:pre;font-family:'Liberation Mono',monospace;font-size:9.2px;letter-spacing:-0.387px;color:#f8f8f2"><span style="color:#f8f8f2;">        </span><span style="color:#a4dc34;">showCamera</span><span style="color:#ec2f6e;">=</span><span style="color:#ec2f6e;">{</span><span style="color:#f8f8f2;">showCamera</span><span style="color:#ec2f6e;">}</span></div>
<div style="position:absolute;left:13px;top:433.44px;width:15.3px;text-align:right;height:12.667px;line-height:12.667px;font-family:'Liberation Mono',monospace;font-size:9.2px;letter-spacing:-0.387px;color:#9a9a94">193</div>
<div style="position:absolute;left:45.60000000000002px;top:433.44px;height:12.667px;line-height:12.667px;white-space:pre;font-family:'Liberation Mono',monospace;font-size:9.2px;letter-spacing:-0.387px;color:#f8f8f2"><span style="color:#f8f8f2;">        </span><span style="color:#a4dc34;">useAcceptWorkflow</span><span style="color:#ec2f6e;">=</span><span style="color:#ec2f6e;">{</span><span style="color:#f69f32;">this</span><span style="color:#f8f8f2;">.props.useAcceptWorkflow</span><span style="color:#ec2f6e;">}</span></div>
<div style="position:absolute;left:13px;top:446.11px;width:15.3px;text-align:right;height:12.667px;line-height:12.667px;font-family:'Liberation Mono',monospace;font-size:9.2px;letter-spacing:-0.387px;color:#9a9a94">194</div>
<div style="position:absolute;left:45.60000000000002px;top:446.11px;height:12.667px;line-height:12.667px;white-space:pre;font-family:'Liberation Mono',monospace;font-size:9.2px;letter-spacing:-0.387px;color:#f8f8f2"><span style="color:#f8f8f2;">        </span><span style="color:#a4dc34;">onCameraError</span><span style="color:#ec2f6e;">=</span><span style="color:#ec2f6e;">{</span><span style="color:#f69f32;">this</span><span style="color:#f8f8f2;">.handleCameraError</span><span style="color:#ec2f6e;">}</span></div>
<div style="position:absolute;left:13px;top:458.78px;width:15.3px;text-align:right;height:12.667px;line-height:12.667px;font-family:'Liberation Mono',monospace;font-size:9.2px;letter-spacing:-0.387px;color:#9a9a94">195</div>
<div style="position:absolute;left:45.60000000000002px;top:458.78px;height:12.667px;line-height:12.667px;white-space:pre;font-family:'Liberation Mono',monospace;font-size:9.2px;letter-spacing:-0.387px;color:#f8f8f2"><span style="color:#f8f8f2;">        </span><span style="color:#a4dc34;">onCameraStart</span><span style="color:#ec2f6e;">=</span><span style="color:#ec2f6e;">{</span><span style="color:#f69f32;">this</span><span style="color:#f8f8f2;">.handleCameraStart</span><span style="color:#ec2f6e;">}</span></div>
<div style="position:absolute;left:13px;top:471.45px;width:15.3px;text-align:right;height:12.667px;line-height:12.667px;font-family:'Liberation Mono',monospace;font-size:9.2px;letter-spacing:-0.387px;color:#9a9a94">196</div>
<div style="position:absolute;left:45.60000000000002px;top:471.45px;height:12.667px;line-height:12.667px;white-space:pre;font-family:'Liberation Mono',monospace;font-size:9.2px;letter-spacing:-0.387px;color:#f8f8f2"><span style="color:#f8f8f2;">        </span><span style="color:#a4dc34;">onCameraStop</span><span style="color:#ec2f6e;">=</span><span style="color:#ec2f6e;">{</span><span style="color:#f69f32;">this</span><span style="color:#f8f8f2;">.handleCameraStop</span><span style="color:#ec2f6e;">}</span></div>
<div style="position:absolute;left:13px;top:484.11px;width:15.3px;text-align:right;height:12.667px;line-height:12.667px;font-family:'Liberation Mono',monospace;font-size:9.2px;letter-spacing:-0.387px;color:#9a9a94">197</div>
<div style="position:absolute;left:45.60000000000002px;top:484.11px;height:12.667px;line-height:12.667px;white-space:pre;font-family:'Liberation Mono',monospace;font-size:9.2px;letter-spacing:-0.387px;color:#f8f8f2"><span style="color:#f8f8f2;">        </span><span style="color:#a4dc34;">onTakePhoto</span><span style="color:#ec2f6e;">=</span><span style="color:#ec2f6e;">{</span><span style="color:#f69f32;">this</span><span style="color:#f8f8f2;">.handleTakePhoto</span><span style="color:#ec2f6e;">}</span></div>
<div style="position:absolute;left:13px;top:496.78px;width:15.3px;text-align:right;height:12.667px;line-height:12.667px;font-family:'Liberation Mono',monospace;font-size:9.2px;letter-spacing:-0.387px;color:#9a9a94">198</div>
<div style="position:absolute;left:45.60000000000002px;top:496.78px;height:12.667px;line-height:12.667px;white-space:pre;font-family:'Liberation Mono',monospace;font-size:9.2px;letter-spacing:-0.387px;color:#f8f8f2"><span style="color:#f8f8f2;">        </span><span style="color:#a4dc34;">onRetakePhoto</span><span style="color:#ec2f6e;">=</span><span style="color:#ec2f6e;">{</span><span style="color:#f69f32;">this</span><span style="color:#f8f8f2;">.handleRetakePhoto</span><span style="color:#ec2f6e;">}</span></div>
<div style="position:absolute;left:13px;top:509.45px;width:15.3px;text-align:right;height:12.667px;line-height:12.667px;font-family:'Liberation Mono',monospace;font-size:9.2px;letter-spacing:-0.387px;color:#9a9a94">199</div>
<div style="position:absolute;left:45.60000000000002px;top:509.45px;height:12.667px;line-height:12.667px;white-space:pre;font-family:'Liberation Mono',monospace;font-size:9.2px;letter-spacing:-0.387px;color:#f8f8f2"><span style="color:#f8f8f2;">        </span><span style="color:#a4dc34;">onAcceptPhoto</span><span style="color:#ec2f6e;">=</span><span style="color:#ec2f6e;">{</span><span style="color:#f69f32;">this</span><span style="color:#f8f8f2;">.handleAcceptPhoto</span><span style="color:#ec2f6e;">}</span></div>
<div style="position:absolute;left:13px;top:522.11px;width:15.3px;text-align:right;height:12.667px;line-height:12.667px;font-family:'Liberation Mono',monospace;font-size:9.2px;letter-spacing:-0.387px;color:#9a9a94">200</div>
<div style="position:absolute;left:45.60000000000002px;top:522.11px;height:12.667px;line-height:12.667px;white-space:pre;font-family:'Liberation Mono',monospace;font-size:9.2px;letter-spacing:-0.387px;color:#f8f8f2"><span style="color:#f8f8f2;">        </span><span style="color:#a4dc34;">onClose</span><span style="color:#ec2f6e;">=</span><span style="color:#ec2f6e;">{</span><span style="color:#a4dc34;">onClose</span><span style="color:#ec2f6e;">}</span></div>
<div style="position:absolute;left:13px;top:534.78px;width:15.3px;text-align:right;height:12.667px;line-height:12.667px;font-family:'Liberation Mono',monospace;font-size:9.2px;letter-spacing:-0.387px;color:#9a9a94">201</div>
<div style="position:absolute;left:45.60000000000002px;top:534.78px;height:12.667px;line-height:12.667px;white-space:pre;font-family:'Liberation Mono',monospace;font-size:9.2px;letter-spacing:-0.387px;color:#f8f8f2"><span style="color:#f8f8f2;">      /&gt;</span></div>
<div style="position:absolute;left:13px;top:547.45px;width:15.3px;text-align:right;height:12.667px;line-height:12.667px;font-family:'Liberation Mono',monospace;font-size:9.2px;letter-spacing:-0.387px;color:#9a9a94">202</div>
<div style="position:absolute;left:45.60000000000002px;top:547.45px;height:12.667px;line-height:12.667px;white-space:pre;font-family:'Liberation Mono',monospace;font-size:9.2px;letter-spacing:-0.387px;color:#f8f8f2"><span style="color:#f8f8f2;">    );</span></div>
<div style="position:absolute;left:13px;top:560.11px;width:15.3px;text-align:right;height:12.667px;line-height:12.667px;font-family:'Liberation Mono',monospace;font-size:9.2px;letter-spacing:-0.387px;color:#9a9a94">203</div>
<div style="position:absolute;left:45.60000000000002px;top:560.11px;height:12.667px;line-height:12.667px;white-space:pre;font-family:'Liberation Mono',monospace;font-size:9.2px;letter-spacing:-0.387px;color:#f8f8f2"><span style="color:#f8f8f2;">  }</span></div>
<div style="position:absolute;left:13px;top:572.78px;width:15.3px;text-align:right;height:12.667px;line-height:12.667px;font-family:'Liberation Mono',monospace;font-size:9.2px;letter-spacing:-0.387px;color:#9a9a94">204</div>
<div style="position:absolute;left:45.60000000000002px;top:572.78px;height:12.667px;line-height:12.667px;white-space:pre;font-family:'Liberation Mono',monospace;font-size:9.2px;letter-spacing:-0.387px;color:#f8f8f2"><span style="color:#f8f8f2;">}</span></div>
<div style="position:absolute;left:13px;top:585.45px;width:15.3px;text-align:right;height:12.667px;line-height:12.667px;font-family:'Liberation Mono',monospace;font-size:9.2px;letter-spacing:-0.387px;color:#9a9a94">205</div>
<div style="position:absolute;left:45.60000000000002px;top:585.45px;height:12.667px;line-height:12.667px;white-space:pre;font-family:'Liberation Mono',monospace;font-size:9.2px;letter-spacing:-0.387px;color:#f8f8f2"></div>
<div style="position:absolute;left:13px;top:598.12px;width:15.3px;text-align:right;height:12.667px;line-height:12.667px;font-family:'Liberation Mono',monospace;font-size:9.2px;letter-spacing:-0.387px;color:#9a9a94">206</div>
<div style="position:absolute;left:45.60000000000002px;top:598.12px;height:12.667px;line-height:12.667px;white-space:pre;font-family:'Liberation Mono',monospace;font-size:9.2px;letter-spacing:-0.387px;color:#f8f8f2"><span style="color:#66d9ef;font-style:italic;">function</span><span style="color:#f8f8f2;"> </span><span style="color:#a4dc34;">CameraPopupWrapper</span><span style="color:#f8f8f2;">(</span><span style="color:#f69f32;font-style:italic;">props</span><span style="color:#f8f8f2;">) {</span></div>
<div style="position:absolute;left:13px;top:610.78px;width:15.3px;text-align:right;height:12.667px;line-height:12.667px;font-family:'Liberation Mono',monospace;font-size:9.2px;letter-spacing:-0.387px;color:#9a9a94">207</div>
<div style="position:absolute;left:45.60000000000002px;top:610.78px;height:12.667px;line-height:12.667px;white-space:pre;font-family:'Liberation Mono',monospace;font-size:9.2px;letter-spacing:-0.387px;color:#f8f8f2"><span style="color:#f8f8f2;">  </span><span style="color:#ec2f6e;">if</span><span style="color:#f8f8f2;"> (</span><span style="color:#ec2f6e;">!</span><span style="color:#f69f32;font-style:italic;">props</span><span style="color:#f8f8f2;">.show) {</span></div>
<div style="position:absolute;left:13px;top:623.45px;width:15.3px;text-align:right;height:12.667px;line-height:12.667px;font-family:'Liberation Mono',monospace;font-size:9.2px;letter-spacing:-0.387px;color:#9a9a94">208</div>
<div style="position:absolute;left:45.60000000000002px;top:623.45px;height:12.667px;line-height:12.667px;white-space:pre;font-family:'Liberation Mono',monospace;font-size:9.2px;letter-spacing:-0.387px;color:#f8f8f2"><span style="color:#f8f8f2;">    </span><span style="color:#ec2f6e;">return</span><span style="color:#f8f8f2;"> </span><span style="color:#ae81ff;">null</span><span style="color:#f8f8f2;">;</span></div>
</div>
<div style="position:absolute;left:0px;top:686px;width:22px;height:14px;background:#b86c26;"></div>
<div style="position:absolute;left:38.7px;top:690.12px;height:10.57px;line-height:10.57px;white-space:pre;color:#ffffff;font-size:7.55px;font-family:'Liberation Sans', sans-serif;">camera</div>
<div style="position:absolute;left:106px;top:690.12px;height:10.57px;line-height:10.57px;white-space:pre;color:#ffffff;font-size:7.55px;font-family:'Liberation Sans', sans-serif;">2</div>
<div style="position:absolute;left:124.5px;top:690.12px;height:10.57px;line-height:10.57px;white-space:pre;color:#ffffff;font-size:7.55px;font-family:'Liberation Sans', sans-serif;">0</div>
<div style="position:absolute;left:140.5px;top:690.12px;height:10.57px;line-height:10.57px;white-space:pre;color:#ffffff;font-size:7.55px;font-family:'Liberation Sans', sans-serif;">Prettier: ...</div>
<div style="position:absolute;left:185.5px;top:690.12px;height:10.57px;line-height:10.57px;white-space:pre;color:#ffffff;font-size:7.55px;font-family:'Liberation Sans', sans-serif;">Git Graph</div>
<div style="position:absolute;left:241.8px;top:690.12px;height:10.57px;line-height:10.57px;white-space:pre;color:#ffffff;font-size:7.55px;font-family:'Liberation Sans', sans-serif;">Select Postgres Server</div>
<div style="position:absolute;left:987px;top:690.12px;height:10.57px;line-height:10.57px;white-space:pre;color:#ffffff;font-size:7.55px;font-family:'Liberation Sans', sans-serif;">Ln 204, Col 2</div>
<div style="position:absolute;left:1042.5px;top:690.12px;height:10.57px;line-height:10.57px;white-space:pre;color:#ffffff;font-size:7.55px;font-family:'Liberation Sans', sans-serif;">Spaces: 2</div>
<div style="position:absolute;left:1085.5px;top:690.12px;height:10.57px;line-height:10.57px;white-space:pre;color:#ffffff;font-size:7.55px;font-family:'Liberation Sans', sans-serif;">UTF-8</div>
<div style="position:absolute;left:1118px;top:690.12px;height:10.57px;line-height:10.57px;white-space:pre;color:#ffffff;font-size:7.55px;font-family:'Liberation Sans', sans-serif;">CRLF</div>
<div style="position:absolute;left:1146px;top:690.12px;height:10.57px;line-height:10.57px;white-space:pre;color:#ffffff;font-size:7.55px;font-family:'Liberation Sans', sans-serif;">TypeScript React</div>
<div style="position:absolute;left:1214.5px;top:690.12px;height:10.57px;line-height:10.57px;white-space:pre;color:#ffffff;font-size:7.55px;font-family:'Liberation Sans', sans-serif;">3.8.3</div>
<div style="position:absolute;left:117px;top:705.74px;height:10.92px;line-height:10.92px;white-space:pre;color:#ffffff;font-size:7.8px;font-family:'Liberation Sans', sans-serif;">TV10 board - Agile Bo...</div>
<div style="position:absolute;left:223px;top:705.74px;height:10.92px;line-height:10.92px;white-space:pre;color:#ffffff;font-size:7.8px;font-family:'Liberation Sans', sans-serif;">index.tsx - web-client...</div>
<div style="position:absolute;left:331px;top:705.74px;height:10.92px;line-height:10.92px;white-space:pre;color:#ffffff;font-size:7.8px;font-family:'Liberation Sans', sans-serif;">Slack | Chirag Parmar ...</div>
<div style="position:absolute;left:438px;top:705.74px;height:10.92px;line-height:10.92px;white-space:pre;color:#ffffff;font-size:7.8px;font-family:'Liberation Sans', sans-serif;">Inbox - Microsoft Out...</div>
<div style="position:absolute;left:545.6px;top:705.74px;height:10.92px;line-height:10.92px;white-space:pre;color:#ffffff;font-size:7.8px;font-family:'Liberation Sans', sans-serif;">Hubstaff</div>
<div style="position:absolute;left:1209.6px;top:705.88px;height:10.64px;line-height:10.64px;white-space:pre;color:#ffffff;font-size:7.6px;font-family:'Liberation Sans', sans-serif;">1:21 PM</div>
<svg style="left:5px;top:2.5px;" width="13" height="13" viewBox="0 0 24 24"><path d="M17.5 1.5 L22.5 4 V20 L17.5 22.5 L7 13 L3 16 L1.5 15 V9 L3 8 L7 11 Z M17.5 7 L11 12 L17.5 17 Z" fill="#23a7f2"/><path d="M17.5 1.5 L22.5 4 V20 L17.5 22.5 Z" fill="#1f8ad2"/></svg>
<div style="position:absolute;left:1200.7px;top:9px;width:7px;height:1px;background:#cccccc;"></div>
<svg style="left:1231px;top:5.8px;" width="8" height="8" viewBox="0 0 8 8"><rect x="0.5" y="1.8" width="5.7" height="5.7" fill="none" stroke="#cccccc" stroke-width="1"/><path d="M2 1.8V0.5H7.5V6H6.2" fill="none" stroke="#cccccc" stroke-width="0.9"/></svg>
<svg style="left:1262px;top:6px;" width="7" height="7" viewBox="0 0 7 7"><path d="M0.4 0.4L6.6 6.6M6.6 0.4L0.4 6.6" stroke="#cccccc" stroke-width="1"/></svg>
<div style="position:absolute;left:0px;top:19px;width:1.3px;height:32.5px;background:#f8f8f2;"></div>
<svg style="left:8px;top:27px;" width="14" height="16" viewBox="0 0 14 16"><path d="M4.5 0.75H9.5L12.75 4V11.25H4.5Z" fill="none" stroke="#f8f8f2" stroke-width="1.3"/><path d="M4.5 4.5H0.75V15.25H9V11.25" fill="none" stroke="#f8f8f2" stroke-width="1.3"/></svg>
<svg style="left:8px;top:56.5px;" width="15" height="16" viewBox="0 0 15 16"><circle cx="9" cy="6" r="5" fill="none" stroke="#8d8e88" stroke-width="1.3"/><path d="M5.5 9.5L0.8 14.8" stroke="#8d8e88" stroke-width="1.4"/></svg>
<svg style="left:9px;top:96.5px;" width="13" height="16" viewBox="0 0 13 16"><circle cx="2.7" cy="2.7" r="1.9" fill="none" stroke="#8d8e88" stroke-width="1.2"/><circle cx="2.7" cy="13.3" r="1.9" fill="none" stroke="#8d8e88" stroke-width="1.2"/><circle cx="10.3" cy="5.3" r="1.9" fill="none" stroke="#8d8e88" stroke-width="1.2"/><path d="M2.7 4.6V11.4M10.3 7.2C10.3 10 2.7 9 2.7 11.4" fill="none" stroke="#8d8e88" stroke-width="1.2"/></svg>
<svg style="left:7px;top:128px;" width="18" height="20" viewBox="0 0 18 20"><path d="M5.4 3L16.1 9.6L9.8 13.6M5.4 3V11.2" fill="none" stroke="#8d8e88" stroke-width="1.25" stroke-linejoin="round"/><circle cx="4.3" cy="15.6" r="2.5" fill="none" stroke="#8d8e88" stroke-width="1.2"/><path d="M0.3 13.6L2.2 14.5M0.3 17.8L2.1 17M8.3 13.6L6.4 14.5M8.3 17.8L6.5 17M4.3 11.8V13.1" stroke="#8d8e88" stroke-width="1"/></svg>
<svg style="left:8px;top:167px;" width="15" height="15" viewBox="0 0 15 15"><path d="M8 10.5H1V1H13V6.5" fill="none" stroke="#8d8e88" stroke-width="1.2"/><path d="M3 13H7" stroke="#8d8e88" stroke-width="1.2"/><circle cx="11" cy="11" r="3.3" fill="none" stroke="#8d8e88" stroke-width="1.2"/><path d="M9.2 12.8L12.8 9.2" stroke="#8d8e88" stroke-width="1.1"/></svg>
<svg style="left:6px;top:199px;" width="18" height="19" viewBox="0 0 18 19"><path d="M1.8 4.6H7.6V10.6H1.8ZM1.8 10.6H7.6V17H1.8ZM7.6 10.6H14V17H7.6Z" fill="none" stroke="#8d8e88" stroke-width="1.25" stroke-linejoin="round"/><rect x="10.8" y="1.6" width="6" height="6" rx="1" fill="none" stroke="#8d8e88" stroke-width="1.25"/></svg>
<svg style="left:10px;top:234.5px;" width="11" height="17" viewBox="0 0 11 17"><rect x="0.8" y="0.8" width="9.4" height="15.4" fill="none" stroke="#8d8e88" stroke-width="1.2"/><path d="M0.8 12H10.2M3 3V6" stroke="#8d8e88" stroke-width="1.1"/></svg>
<svg style="left:8px;top:270px;" width="15" height="16" viewBox="0 0 15 16"><rect x="0.8" y="0.8" width="13.4" height="14.4" rx="3.5" fill="none" stroke="#8d8e88" stroke-width="1.2"/><path d="M4 4C6 2 9 2 11 4C12 6 11 10 9 12C8 13 7 11 7 9M5 5V11C5 12 6 13 7 12" fill="none" stroke="#8d8e88" stroke-width="1.1"/></svg>
<svg style="left:6.5px;top:658px;" width="17.5" height="17.5" viewBox="0 0 24 24"><path d="M10 2H14L14.6 5A7.5 7.5 0 0 1 16.8 6.3L19.7 5.3L21.7 8.7L19.4 10.8A7.5 7.5 0 0 1 19.4 13.2L21.7 15.3L19.7 18.7L16.8 17.7A7.5 7.5 0 0 1 14.6 19L14 22H10L9.4 19A7.5 7.5 0 0 1 7.2 17.7L4.3 18.7L2.3 15.3L4.6 13.2A7.5 7.5 0 0 1 4.6 10.8L2.3 8.7L4.3 5.3L7.2 6.3A7.5 7.5 0 0 1 9.4 5Z" fill="none" stroke="#8d8e88" stroke-width="1.5" stroke-linejoin="round"/><circle cx="12" cy="12" r="3" fill="none" stroke="#8d8e88" stroke-width="1.5"/></svg>
<svg style="left:33.5px;top:47.5px;" width="7" height="5" viewBox="0 0 7 5"><path d="M0.6 0.8L3.5 3.8L6.4 0.8" fill="none" stroke="#c5c5c5" stroke-width="1"/></svg>
<svg style="left:33.5px;top:77.0px;" width="7" height="5" viewBox="0 0 7 5"><path d="M0.6 0.8L3.5 3.8L6.4 0.8" fill="none" stroke="#c5c5c5" stroke-width="1"/></svg>
<svg style="left:35px;top:632.0px;" width="5" height="7" viewBox="0 0 5 7"><path d="M0.8 0.6L3.8 3.5L0.8 6.4" fill="none" stroke="#c5c5c5" stroke-width="1"/></svg>
<svg style="left:35px;top:646.5px;" width="5" height="7" viewBox="0 0 5 7"><path d="M0.8 0.6L3.8 3.5L0.8 6.4" fill="none" stroke="#c5c5c5" stroke-width="1"/></svg>
<svg style="left:35px;top:661.0px;" width="5" height="7" viewBox="0 0 5 7"><path d="M0.8 0.6L3.8 3.5L0.8 6.4" fill="none" stroke="#c5c5c5" stroke-width="1"/></svg>
<svg style="left:35px;top:676.0px;" width="5" height="7" viewBox="0 0 5 7"><path d="M0.8 0.6L3.8 3.5L0.8 6.4" fill="none" stroke="#c5c5c5" stroke-width="1"/></svg>
<svg style="left:45.8px;top:60.5px;" width="6.5" height="6.5" viewBox="0 0 10 10"><path d="M1 1L9 9M9 1L1 9" stroke="#c5c5c5" stroke-width="1.4"/></svg>
<svg style="left:56px;top:60.5px;" width="9" height="9" viewBox="0 0 24 24"><g fill="none" stroke="#4f93b5" stroke-width="1.7"><ellipse cx="12" cy="12" rx="11" ry="4.2"/><ellipse cx="12" cy="12" rx="11" ry="4.2" transform="rotate(60 12 12)"/><ellipse cx="12" cy="12" rx="11" ry="4.2" transform="rotate(-60 12 12)"/></g><circle cx="12" cy="12" r="2.2" fill="#4f93b5"/></svg>
<svg style="left:44.2px;top:91.2px;" width="5" height="7" viewBox="0 0 5 7"><path d="M0.8 0.6L3.8 3.5L0.8 6.4" fill="none" stroke="#c5c5c5" stroke-width="1"/></svg>
<svg style="left:44.2px;top:105.867px;" width="5" height="7" viewBox="0 0 5 7"><path d="M0.8 0.6L3.8 3.5L0.8 6.4" fill="none" stroke="#c5c5c5" stroke-width="1"/></svg>
<svg style="left:44.2px;top:120.534px;" width="5" height="7" viewBox="0 0 5 7"><path d="M0.8 0.6L3.8 3.5L0.8 6.4" fill="none" stroke="#c5c5c5" stroke-width="1"/></svg>
<svg style="left:44.2px;top:135.201px;" width="5" height="7" viewBox="0 0 5 7"><path d="M0.8 0.6L3.8 3.5L0.8 6.4" fill="none" stroke="#c5c5c5" stroke-width="1"/></svg>
<svg style="left:43.0px;top:150.868px;" width="7" height="5" viewBox="0 0 7 5"><path d="M0.6 0.8L3.5 3.8L6.4 0.8" fill="none" stroke="#c5c5c5" stroke-width="1"/></svg>
<svg style="left:49.55px;top:164.53499999999997px;" width="5" height="7" viewBox="0 0 5 7"><path d="M0.8 0.6L3.8 3.5L0.8 6.4" fill="none" stroke="#c5c5c5" stroke-width="1"/></svg>
<svg style="left:49.55px;top:179.202px;" width="5" height="7" viewBox="0 0 5 7"><path d="M0.8 0.6L3.8 3.5L0.8 6.4" fill="none" stroke="#c5c5c5" stroke-width="1"/></svg>
<svg style="left:49.55px;top:193.86899999999997px;" width="5" height="7" viewBox="0 0 5 7"><path d="M0.8 0.6L3.8 3.5L0.8 6.4" fill="none" stroke="#c5c5c5" stroke-width="1"/></svg>
<svg style="left:49.55px;top:208.536px;" width="5" height="7" viewBox="0 0 5 7"><path d="M0.8 0.6L3.8 3.5L0.8 6.4" fill="none" stroke="#c5c5c5" stroke-width="1"/></svg>
<svg style="left:49.55px;top:223.20299999999997px;" width="5" height="7" viewBox="0 0 5 7"><path d="M0.8 0.6L3.8 3.5L0.8 6.4" fill="none" stroke="#c5c5c5" stroke-width="1"/></svg>
<div style="position:absolute;left:48.45px;top:234.97px;height:14.00px;line-height:14.00px;white-space:pre;color:#519aba;font-size:10px;font-family:'Liberation Sans', sans-serif;font-weight:bold">#</div>
<div style="position:absolute;left:48.45px;top:249.64px;height:14.00px;line-height:14.00px;white-space:pre;color:#519aba;font-size:10px;font-family:'Liberation Sans', sans-serif;font-weight:bold">#</div>
<div style="position:absolute;left:48.45px;top:264.30px;height:14.00px;line-height:14.00px;white-space:pre;color:#519aba;font-size:10px;font-family:'Liberation Sans', sans-serif;font-weight:bold">#</div>
<svg style="left:47.75px;top:282.871px;" width="7" height="5" viewBox="0 0 7 5"><path d="M2.5 0.5L0.7 2.5L2.5 4.5M4.5 0.5L6.3 2.5L4.5 4.5" fill="none" stroke="#e37933" stroke-width="1.1"/></svg>
<div style="position:absolute;left:48.45px;top:293.64px;height:14.00px;line-height:14.00px;white-space:pre;color:#519aba;font-size:10px;font-family:'Liberation Sans', sans-serif;font-weight:bold">#</div>
<div style="position:absolute;left:47.55px;top:310.16px;height:10.08px;line-height:10.08px;white-space:pre;color:#cbcb41;font-size:7.2px;font-family:'Liberation Sans', sans-serif;font-weight:bold;letter-spacing:-0.5px">JS</div>
<svg style="left:43.0px;top:326.872px;" width="7" height="5" viewBox="0 0 7 5"><path d="M0.6 0.8L3.5 3.8L6.4 0.8" fill="none" stroke="#c5c5c5" stroke-width="1"/></svg>
<svg style="left:49.55px;top:340.539px;" width="5" height="7" viewBox="0 0 5 7"><path d="M0.8 0.6L3.8 3.5L0.8 6.4" fill="none" stroke="#c5c5c5" stroke-width="1"/></svg>
<svg style="left:49.55px;top:355.20599999999996px;" width="5" height="7" viewBox="0 0 5 7"><path d="M0.8 0.6L3.8 3.5L0.8 6.4" fill="none" stroke="#c5c5c5" stroke-width="1"/></svg>
<svg style="left:49.55px;top:369.873px;" width="5" height="7" viewBox="0 0 5 7"><path d="M0.8 0.6L3.8 3.5L0.8 6.4" fill="none" stroke="#c5c5c5" stroke-width="1"/></svg>
<svg style="left:49.55px;top:384.53999999999996px;" width="5" height="7" viewBox="0 0 5 7"><path d="M0.8 0.6L3.8 3.5L0.8 6.4" fill="none" stroke="#c5c5c5" stroke-width="1"/></svg>
<svg style="left:48.35px;top:400.207px;" width="7" height="5" viewBox="0 0 7 5"><path d="M0.6 0.8L3.5 3.8L6.4 0.8" fill="none" stroke="#c5c5c5" stroke-width="1"/></svg>
<svg style="left:53.699999999999996px;top:414.87399999999997px;" width="7" height="5" viewBox="0 0 7 5"><path d="M0.6 0.8L3.5 3.8L6.4 0.8" fill="none" stroke="#c5c5c5" stroke-width="1"/></svg>
<svg style="left:59.04999999999999px;top:429.541px;" width="7" height="5" viewBox="0 0 7 5"><path d="M0.6 0.8L3.5 3.8L6.4 0.8" fill="none" stroke="#c5c5c5" stroke-width="1"/></svg>
<svg style="left:63.599999999999994px;top:442.70799999999997px;" width="8" height="8" viewBox="0 0 24 24"><g fill="none" stroke="#4f93b5" stroke-width="1.7"><ellipse cx="12" cy="12" rx="11" ry="4.2"/><ellipse cx="12" cy="12" rx="11" ry="4.2" transform="rotate(60 12 12)"/><ellipse cx="12" cy="12" rx="11" ry="4.2" transform="rotate(-60 12 12)"/></g><circle cx="12" cy="12" r="2.2" fill="#4f93b5"/></svg>
<svg style="left:63.599999999999994px;top:457.375px;" width="8" height="8" viewBox="0 0 24 24"><g fill="none" stroke="#4f93b5" stroke-width="1.7"><ellipse cx="12" cy="12" rx="11" ry="4.2"/><ellipse cx="12" cy="12" rx="11" ry="4.2" transform="rotate(60 12 12)"/><ellipse cx="12" cy="12" rx="11" ry="4.2" transform="rotate(-60 12 12)"/></g><circle cx="12" cy="12" r="2.2" fill="#4f93b5"/></svg>
<svg style="left:63.599999999999994px;top:472.042px;" width="8" height="8" viewBox="0 0 24 24"><g fill="none" stroke="#4f93b5" stroke-width="1.7"><ellipse cx="12" cy="12" rx="11" ry="4.2"/><ellipse cx="12" cy="12" rx="11" ry="4.2" transform="rotate(60 12 12)"/><ellipse cx="12" cy="12" rx="11" ry="4.2" transform="rotate(-60 12 12)"/></g><circle cx="12" cy="12" r="2.2" fill="#4f93b5"/></svg>
<div style="position:absolute;left:63.0px;top:486.17px;height:10.08px;line-height:10.08px;white-space:pre;color:#519aba;font-size:7.2px;font-family:'Liberation Sans', sans-serif;font-weight:bold;letter-spacing:-0.5px">TS</div>
<svg style="left:60.249999999999986px;top:501.876px;" width="5" height="7" viewBox="0 0 5 7"><path d="M0.8 0.6L3.8 3.5L0.8 6.4" fill="none" stroke="#c5c5c5" stroke-width="1"/></svg>
<svg style="left:60.249999999999986px;top:516.5430000000001px;" width="5" height="7" viewBox="0 0 5 7"><path d="M0.8 0.6L3.8 3.5L0.8 6.4" fill="none" stroke="#c5c5c5" stroke-width="1"/></svg>
<svg style="left:54.89999999999999px;top:531.21px;" width="5" height="7" viewBox="0 0 5 7"><path d="M0.8 0.6L3.8 3.5L0.8 6.4" fill="none" stroke="#c5c5c5" stroke-width="1"/></svg>
<svg style="left:54.89999999999999px;top:545.8770000000001px;" width="5" height="7" viewBox="0 0 5 7"><path d="M0.8 0.6L3.8 3.5L0.8 6.4" fill="none" stroke="#c5c5c5" stroke-width="1"/></svg>
<svg style="left:54.89999999999999px;top:560.5440000000001px;" width="5" height="7" viewBox="0 0 5 7"><path d="M0.8 0.6L3.8 3.5L0.8 6.4" fill="none" stroke="#c5c5c5" stroke-width="1"/></svg>
<svg style="left:54.89999999999999px;top:575.211px;" width="5" height="7" viewBox="0 0 5 7"><path d="M0.8 0.6L3.8 3.5L0.8 6.4" fill="none" stroke="#c5c5c5" stroke-width="1"/></svg>
<svg style="left:54.89999999999999px;top:589.878px;" width="5" height="7" viewBox="0 0 5 7"><path d="M0.8 0.6L3.8 3.5L0.8 6.4" fill="none" stroke="#c5c5c5" stroke-width="1"/></svg>
<svg style="left:54.89999999999999px;top:604.5450000000001px;" width="5" height="7" viewBox="0 0 5 7"><path d="M0.8 0.6L3.8 3.5L0.8 6.4" fill="none" stroke="#c5c5c5" stroke-width="1"/></svg>
<svg style="left:54.89999999999999px;top:619.212px;" width="5" height="7" viewBox="0 0 5 7"><path d="M0.8 0.6L3.8 3.5L0.8 6.4" fill="none" stroke="#c5c5c5" stroke-width="1"/></svg>
<div style="position:absolute;left:60.8px;top:440px;width:0.9px;height:56px;background:#585953;"></div>
<svg style="left:286.5px;top:26.5px;" width="9" height="9" viewBox="0 0 24 24"><g fill="none" stroke="#4f93b5" stroke-width="1.7"><ellipse cx="12" cy="12" rx="11" ry="4.2"/><ellipse cx="12" cy="12" rx="11" ry="4.2" transform="rotate(60 12 12)"/><ellipse cx="12" cy="12" rx="11" ry="4.2" transform="rotate(-60 12 12)"/></g><circle cx="12" cy="12" r="2.2" fill="#4f93b5"/></svg>
<svg style="left:342.5px;top:27px;" width="7" height="7" viewBox="0 0 10 10"><path d="M1 1L9 9M9 1L1 9" stroke="#e8e8e8" stroke-width="1.4"/></svg>
<svg style="left:1216px;top:26px;" width="10" height="10" viewBox="0 0 16 16"><circle cx="3" cy="2.5" r="1.8" fill="none" stroke="#c5c5c5" stroke-width="1.3"/><circle cx="13" cy="13.5" r="1.8" fill="none" stroke="#c5c5c5" stroke-width="1.3"/><path d="M3 4.3V13.5H8M13 11.7V2.5H8M6 11.5L8 13.5L6 15.5M10 0.5L8 2.5L10 4.5" fill="none" stroke="#c5c5c5" stroke-width="1.3"/></svg>
<svg style="left:1238.5px;top:26px;" width="9" height="10" viewBox="0 0 9 10"><rect x="0.6" y="0.6" width="7.8" height="8.8" fill="none" stroke="#c5c5c5" stroke-width="1.1"/><path d="M4.5 0.6V9.4" stroke="#c5c5c5" stroke-width="1.1"/></svg>
<div style="position:absolute;left:1259.2px;top:30.2px;width:1.8px;height:1.8px;background:#c5c5c5;border-radius:50%"></div>
<div style="position:absolute;left:1262.7px;top:30.2px;width:1.8px;height:1.8px;background:#c5c5c5;border-radius:50%"></div>
<div style="position:absolute;left:1266.2px;top:30.2px;width:1.8px;height:1.8px;background:#c5c5c5;border-radius:50%"></div>
<svg style="left:511px;top:46.8px;" width="8" height="8" viewBox="0 0 24 24"><g fill="none" stroke="#4f93b5" stroke-width="1.7"><ellipse cx="12" cy="12" rx="11" ry="4.2"/><ellipse cx="12" cy="12" rx="11" ry="4.2" transform="rotate(60 12 12)"/><ellipse cx="12" cy="12" rx="11" ry="4.2" transform="rotate(-60 12 12)"/></g><circle cx="12" cy="12" r="2.2" fill="#4f93b5"/></svg>
<svg style="left:567px;top:46.5px;" width="11" height="9" viewBox="0 0 11 9"><path d="M2.5 0.8H0.8V3.5L0 4.5L0.8 5.5V8.2H2.5M8.5 0.8H10.2V3.5L11 4.5L10.2 5.5V8.2H8.5" fill="none" stroke="#ee9d28" stroke-width="1"/><circle cx="4" cy="3.5" r="1.4" fill="none" stroke="#ee9d28" stroke-width="0.9"/><circle cx="7" cy="5.5" r="1.4" fill="none" stroke="#ee9d28" stroke-width="0.9"/></svg>
<svg style="left:363.9px;top:449.3px;" width="36" height="2" viewBox="0 0 36 2"><path d="M0 1.5 L0.90 0.3 L2.70 1.5 L4.50 0.3 L6.30 1.5 L8.10 0.3 L9.90 1.5 L11.70 0.3 L13.50 1.5 L15.30 0.3 L17.10 1.5 L18.90 0.3 L20.70 1.5 L22.50 0.3 L24.30 1.5 L26.10 0.3 L27.90 1.5 L29.70 0.3 L31.50 1.5 L33.30 0.3 L35.10 1.5" fill="none" stroke="#c08a5c" stroke-width="0.8"/></svg>
<div style="position:absolute;left:464.5px;top:666.6px;width:1.2px;height:1.2px;background:#9a9a90;"></div>
<div style="position:absolute;left:467.5px;top:666.6px;width:1.2px;height:1.2px;background:#9a9a90;"></div>
<div style="position:absolute;left:470.5px;top:666.6px;width:1.2px;height:1.2px;background:#9a9a90;"></div>
<div style="position:absolute;left:1271.2px;top:57.5px;width:1px;height:628.5px;background:#3b3c36;"></div>
<div style="position:absolute;left:1271.4px;top:414.3px;width:8.6px;height:110px;background:#4a4b45;"></div>
<div style="position:absolute;left:1275px;top:141.7px;width:3px;height:3.3px;background:#d8d8d8;"></div>
<div style="position:absolute;left:1276.8px;top:189.5px;width:3.2px;height:5.5px;background:#b8303a;"></div>
<div style="position:absolute;left:1277px;top:480px;width:3px;height:5px;background:#9a4040;"></div>
<div style="position:absolute;left:1271.5px;top:515.3px;width:8.5px;height:1.4px;background:#c8c8c8;"></div>
<div style="position:absolute;left:1196px;top:327.5px;width:75px;height:1px;background:#5a5b55;"></div>
<svg style="left:1196.5px;top:57.5px;opacity:0.5" width="80" height="320" viewBox="0 0 80 320"><rect x="1.33" y="211.95" width="10.67" height="1" fill="#a4dc34"/><rect x="12.01" y="211.95" width="1.33" height="1" fill="#f8f8f2"/><rect x="14.01" y="211.95" width="0.67" height="1" fill="#f8f8f2"/><rect x="2.67" y="213.28" width="1.33" height="1" fill="#88846f"/><rect x="4.67" y="213.28" width="18.68" height="1" fill="#88846f"/><rect x="2.67" y="214.61" width="1.33" height="1" fill="#ec2f6e"/><rect x="4.67" y="214.61" width="0.67" height="1" fill="#f8f8f2"/><rect x="5.34" y="214.61" width="0.67" height="1" fill="#ec2f6e"/><rect x="6.00" y="214.61" width="7.34" height="1" fill="#a4dc34"/><rect x="13.34" y="214.61" width="0.67" height="1" fill="#f8f8f2"/><rect x="14.01" y="214.61" width="2.67" height="1" fill="#f69f32"/><rect x="16.67" y="214.61" width="6.67" height="1" fill="#f8f8f2"/><rect x="24.01" y="214.61" width="0.67" height="1" fill="#f8f8f2"/><rect x="4.00" y="215.95" width="6.67" height="1" fill="#f8f8f2"/><rect x="10.67" y="215.95" width="7.34" height="1" fill="#66d9ef"/><rect x="18.01" y="215.95" width="0.67" height="1" fill="#f8f8f2"/><rect x="18.68" y="215.95" width="6.67" height="1" fill="#66d9ef"/><rect x="25.35" y="215.95" width="0.67" height="1" fill="#f8f8f2"/><rect x="26.01" y="215.95" width="2.67" height="1" fill="#f69f32"/><rect x="28.68" y="215.95" width="6.67" height="1" fill="#f8f8f2"/><rect x="4.00" y="217.28" width="2.67" height="1" fill="#f69f32"/><rect x="6.67" y="217.28" width="5.34" height="1" fill="#f8f8f2"/><rect x="12.67" y="217.28" width="0.67" height="1" fill="#ec2f6e"/><rect x="14.01" y="217.28" width="2.67" height="1" fill="#ec2f6e"/><rect x="17.34" y="217.28" width="0.67" height="1" fill="#ae81ff"/><rect x="18.01" y="217.28" width="0.67" height="1" fill="#f8f8f2"/><rect x="4.00" y="218.61" width="2.67" height="1" fill="#f69f32"/><rect x="6.67" y="218.61" width="12.01" height="1" fill="#f8f8f2"/><rect x="19.34" y="218.61" width="0.67" height="1" fill="#ec2f6e"/><rect x="20.68" y="218.61" width="2.67" height="1" fill="#ec2f6e"/><rect x="24.01" y="218.61" width="0.67" height="1" fill="#ae81ff"/><rect x="24.68" y="218.61" width="0.67" height="1" fill="#f8f8f2"/><rect x="2.67" y="219.94" width="0.67" height="1" fill="#f8f8f2"/><rect x="2.67" y="221.28" width="1.33" height="1" fill="#ec2f6e"/><rect x="4.67" y="221.28" width="0.67" height="1" fill="#f8f8f2"/><rect x="5.34" y="221.28" width="0.67" height="1" fill="#ec2f6e"/><rect x="6.00" y="221.28" width="2.67" height="1" fill="#f69f32"/><rect x="8.67" y="221.28" width="7.34" height="1" fill="#f8f8f2"/><rect x="16.67" y="221.28" width="0.67" height="1" fill="#f8f8f2"/><rect x="4.00" y="222.61" width="2.67" height="1" fill="#f69f32"/><rect x="6.67" y="222.61" width="0.67" height="1" fill="#f8f8f2"/><rect x="7.34" y="222.61" width="5.34" height="1" fill="#a4dc34"/><rect x="12.67" y="222.61" width="1.33" height="1" fill="#f8f8f2"/><rect x="5.34" y="223.94" width="9.34" height="1" fill="#f8f8f2"/><rect x="15.34" y="223.94" width="3.33" height="1" fill="#ae81ff"/><rect x="18.68" y="223.94" width="0.67" height="1" fill="#f8f8f2"/><rect x="4.00" y="225.28" width="2.00" height="1" fill="#f8f8f2"/><rect x="2.67" y="226.61" width="0.67" height="1" fill="#f8f8f2"/><rect x="1.33" y="227.94" width="0.67" height="1" fill="#f8f8f2"/><rect x="1.33" y="230.61" width="4.00" height="1" fill="#a4dc34"/><rect x="5.34" y="230.61" width="1.33" height="1" fill="#f8f8f2"/><rect x="7.34" y="230.61" width="0.67" height="1" fill="#f8f8f2"/><rect x="2.67" y="231.94" width="3.33" height="1" fill="#66d9ef"/><rect x="6.67" y="231.94" width="0.67" height="1" fill="#f8f8f2"/><rect x="4.00" y="233.27" width="4.67" height="1" fill="#a4dc34"/><rect x="8.67" y="233.27" width="0.67" height="1" fill="#f8f8f2"/><rect x="2.67" y="234.61" width="0.67" height="1" fill="#f8f8f2"/><rect x="4.00" y="234.61" width="0.67" height="1" fill="#ec2f6e"/><rect x="5.34" y="234.61" width="2.67" height="1" fill="#f69f32"/><rect x="8.00" y="234.61" width="4.67" height="1" fill="#f8f8f2"/><rect x="2.67" y="235.94" width="3.33" height="1" fill="#66d9ef"/><rect x="6.67" y="235.94" width="0.67" height="1" fill="#f8f8f2"/><rect x="4.00" y="237.27" width="7.34" height="1" fill="#f8f8f2"/><rect x="4.00" y="238.61" width="4.00" height="1" fill="#f8f8f2"/><rect x="4.00" y="239.94" width="7.34" height="1" fill="#f8f8f2"/><rect x="4.00" y="241.27" width="8.67" height="1" fill="#88846f"/><rect x="12.67" y="241.27" width="0.67" height="1" fill="#f8f8f2"/><rect x="4.00" y="242.61" width="5.34" height="1" fill="#f8f8f2"/><rect x="2.67" y="243.94" width="0.67" height="1" fill="#f8f8f2"/><rect x="4.00" y="243.94" width="0.67" height="1" fill="#ec2f6e"/><rect x="5.34" y="243.94" width="2.67" height="1" fill="#f69f32"/><rect x="8.00" y="243.94" width="4.67" height="1" fill="#f8f8f2"/><rect x="2.67" y="246.61" width="4.00" height="1" fill="#ec2f6e"/><rect x="7.34" y="246.61" width="0.67" height="1" fill="#f8f8f2"/><rect x="4.00" y="247.94" width="0.67" height="1" fill="#f8f8f2"/><rect x="4.67" y="247.94" width="6.67" height="1" fill="#66d9ef"/><rect x="5.34" y="249.27" width="3.33" height="1" fill="#a4dc34"/><rect x="8.67" y="249.27" width="0.67" height="1" fill="#ec2f6e"/><rect x="9.34" y="249.27" width="0.67" height="1" fill="#ec2f6e"/><rect x="10.00" y="249.27" width="3.33" height="1" fill="#f8f8f2"/><rect x="13.34" y="249.27" width="0.67" height="1" fill="#ec2f6e"/><rect x="5.34" y="250.60" width="4.67" height="1" fill="#a4dc34"/><rect x="10.01" y="250.60" width="0.67" height="1" fill="#ec2f6e"/><rect x="10.67" y="250.60" width="0.67" height="1" fill="#ec2f6e"/><rect x="11.34" y="250.60" width="4.67" height="1" fill="#f8f8f2"/><rect x="16.01" y="250.60" width="0.67" height="1" fill="#ec2f6e"/><rect x="5.34" y="251.94" width="6.67" height="1" fill="#a4dc34"/><rect x="12.01" y="251.94" width="0.67" height="1" fill="#ec2f6e"/><rect x="12.67" y="251.94" width="0.67" height="1" fill="#ec2f6e"/><rect x="13.34" y="251.94" width="6.67" height="1" fill="#f8f8f2"/><rect x="20.01" y="251.94" width="0.67" height="1" fill="#ec2f6e"/><rect x="5.34" y="253.27" width="6.00" height="1" fill="#a4dc34"/><rect x="11.34" y="253.27" width="0.67" height="1" fill="#ec2f6e"/><rect x="12.01" y="253.27" width="0.67" height="1" fill="#ec2f6e"/><rect x="12.67" y="253.27" width="2.67" height="1" fill="#f69f32"/><rect x="15.34" y="253.27" width="0.67" height="1" fill="#f8f8f2"/><rect x="16.01" y="253.27" width="8.67" height="1" fill="#a4dc34"/><rect x="24.68" y="253.27" width="0.67" height="1" fill="#ec2f6e"/><rect x="5.34" y="254.60" width="6.67" height="1" fill="#a4dc34"/><rect x="12.01" y="254.60" width="0.67" height="1" fill="#ec2f6e"/><rect x="12.67" y="254.60" width="0.67" height="1" fill="#ec2f6e"/><rect x="13.34" y="254.60" width="6.67" height="1" fill="#f8f8f2"/><rect x="20.01" y="254.60" width="0.67" height="1" fill="#ec2f6e"/><rect x="5.34" y="255.94" width="11.34" height="1" fill="#a4dc34"/><rect x="16.67" y="255.94" width="0.67" height="1" fill="#ec2f6e"/><rect x="17.34" y="255.94" width="0.67" height="1" fill="#ec2f6e"/><rect x="18.01" y="255.94" width="2.67" height="1" fill="#f69f32"/><rect x="20.68" y="255.94" width="16.01" height="1" fill="#f8f8f2"/><rect x="36.68" y="255.94" width="0.67" height="1" fill="#ec2f6e"/><rect x="5.34" y="257.27" width="8.67" height="1" fill="#a4dc34"/><rect x="14.01" y="257.27" width="0.67" height="1" fill="#ec2f6e"/><rect x="14.67" y="257.27" width="0.67" height="1" fill="#ec2f6e"/><rect x="15.34" y="257.27" width="2.67" height="1" fill="#f69f32"/><rect x="18.01" y="257.27" width="12.01" height="1" fill="#f8f8f2"/><rect x="30.01" y="257.27" width="0.67" height="1" fill="#ec2f6e"/><rect x="5.34" y="258.60" width="8.67" height="1" fill="#a4dc34"/><rect x="14.01" y="258.60" width="0.67" height="1" fill="#ec2f6e"/><rect x="14.67" y="258.60" width="0.67" height="1" fill="#ec2f6e"/><rect x="15.34" y="258.60" width="2.67" height="1" fill="#f69f32"/><rect x="18.01" y="258.60" width="12.01" height="1" fill="#f8f8f2"/><rect x="30.01" y="258.60" width="0.67" height="1" fill="#ec2f6e"/><rect x="5.34" y="259.94" width="8.00" height="1" fill="#a4dc34"/><rect x="13.34" y="259.94" width="0.67" height="1" fill="#ec2f6e"/><rect x="14.01" y="259.94" width="0.67" height="1" fill="#ec2f6e"/><rect x="14.67" y="259.94" width="2.67" height="1" fill="#f69f32"/><rect x="17.34" y="259.94" width="11.34" height="1" fill="#f8f8f2"/><rect x="28.68" y="259.94" width="0.67" height="1" fill="#ec2f6e"/><rect x="5.34" y="261.27" width="7.34" height="1" fill="#a4dc34"/><rect x="12.67" y="261.27" width="0.67" height="1" fill="#ec2f6e"/><rect x="13.34" y="261.27" width="0.67" height="1" fill="#ec2f6e"/><rect x="14.01" y="261.27" width="2.67" height="1" fill="#f69f32"/><rect x="16.67" y="261.27" width="10.67" height="1" fill="#f8f8f2"/><rect x="27.35" y="261.27" width="0.67" height="1" fill="#ec2f6e"/><rect x="5.34" y="262.60" width="8.67" height="1" fill="#a4dc34"/><rect x="14.01" y="262.60" width="0.67" height="1" fill="#ec2f6e"/><rect x="14.67" y="262.60" width="0.67" height="1" fill="#ec2f6e"/><rect x="15.34" y="262.60" width="2.67" height="1" fill="#f69f32"/><rect x="18.01" y="262.60" width="12.01" height="1" fill="#f8f8f2"/><rect x="30.01" y="262.60" width="0.67" height="1" fill="#ec2f6e"/><rect x="5.34" y="263.93" width="8.67" height="1" fill="#a4dc34"/><rect x="14.01" y="263.93" width="0.67" height="1" fill="#ec2f6e"/><rect x="14.67" y="263.93" width="0.67" height="1" fill="#ec2f6e"/><rect x="15.34" y="263.93" width="2.67" height="1" fill="#f69f32"/><rect x="18.01" y="263.93" width="12.01" height="1" fill="#f8f8f2"/><rect x="30.01" y="263.93" width="0.67" height="1" fill="#ec2f6e"/><rect x="5.34" y="265.27" width="4.67" height="1" fill="#a4dc34"/><rect x="10.01" y="265.27" width="0.67" height="1" fill="#ec2f6e"/><rect x="10.67" y="265.27" width="0.67" height="1" fill="#ec2f6e"/><rect x="11.34" y="265.27" width="4.67" height="1" fill="#a4dc34"/><rect x="16.01" y="265.27" width="0.67" height="1" fill="#ec2f6e"/><rect x="4.00" y="266.60" width="1.33" height="1" fill="#f8f8f2"/><rect x="2.67" y="267.93" width="1.33" height="1" fill="#f8f8f2"/><rect x="1.33" y="269.27" width="0.67" height="1" fill="#f8f8f2"/><rect x="0.00" y="270.60" width="0.67" height="1" fill="#f8f8f2"/><rect x="0.00" y="273.26" width="5.34" height="1" fill="#66d9ef"/><rect x="6.00" y="273.26" width="12.01" height="1" fill="#a4dc34"/><rect x="18.01" y="273.26" width="0.67" height="1" fill="#f8f8f2"/><rect x="18.68" y="273.26" width="3.33" height="1" fill="#f69f32"/><rect x="22.01" y="273.26" width="0.67" height="1" fill="#f8f8f2"/><rect x="23.34" y="273.26" width="0.67" height="1" fill="#f8f8f2"/><rect x="1.33" y="274.60" width="1.33" height="1" fill="#ec2f6e"/><rect x="3.34" y="274.60" width="0.67" height="1" fill="#f8f8f2"/><rect x="4.00" y="274.60" width="0.67" height="1" fill="#ec2f6e"/><rect x="4.67" y="274.60" width="3.33" height="1" fill="#f69f32"/><rect x="8.00" y="274.60" width="4.00" height="1" fill="#f8f8f2"/><rect x="12.67" y="274.60" width="0.67" height="1" fill="#f8f8f2"/><rect x="2.67" y="275.93" width="4.00" height="1" fill="#ec2f6e"/><rect x="7.34" y="275.93" width="2.67" height="1" fill="#ae81ff"/><rect x="10.00" y="275.93" width="0.67" height="1" fill="#f8f8f2"/><rect x="0.00" y="0.00" width="4.00" height="1" fill="#ec2f6e"/><rect x="4.67" y="0.00" width="7.34" height="1" fill="#f8f8f2"/><rect x="12.67" y="0.00" width="2.67" height="1" fill="#ec2f6e"/><rect x="16.01" y="0.00" width="13.34" height="1" fill="#e6db74"/><rect x="0.00" y="1.33" width="4.00" height="1" fill="#ec2f6e"/><rect x="4.67" y="1.33" width="2.00" height="1" fill="#f8f8f2"/><rect x="7.34" y="1.33" width="2.67" height="1" fill="#ec2f6e"/><rect x="10.67" y="1.33" width="15.34" height="1" fill="#e6db74"/><rect x="0.00" y="2.67" width="4.00" height="1" fill="#ec2f6e"/><rect x="4.67" y="2.67" width="6.67" height="1" fill="#f8f8f2"/><rect x="12.01" y="2.67" width="2.67" height="1" fill="#ec2f6e"/><rect x="15.34" y="2.67" width="6.67" height="1" fill="#e6db74"/><rect x="0.00" y="4.00" width="4.00" height="1" fill="#ec2f6e"/><rect x="4.67" y="4.00" width="5.34" height="1" fill="#f8f8f2"/><rect x="10.67" y="4.00" width="2.67" height="1" fill="#ec2f6e"/><rect x="14.01" y="4.00" width="8.00" height="1" fill="#e6db74"/><rect x="0.00" y="5.33" width="4.00" height="1" fill="#ec2f6e"/><rect x="4.67" y="5.33" width="9.34" height="1" fill="#f8f8f2"/><rect x="14.67" y="5.33" width="2.67" height="1" fill="#ec2f6e"/><rect x="18.01" y="5.33" width="16.01" height="1" fill="#e6db74"/><rect x="0.00" y="6.67" width="4.00" height="1" fill="#ec2f6e"/><rect x="4.67" y="6.67" width="6.67" height="1" fill="#f8f8f2"/><rect x="12.01" y="6.67" width="2.67" height="1" fill="#ec2f6e"/><rect x="15.34" y="6.67" width="14.01" height="1" fill="#e6db74"/><rect x="0.00" y="8.00" width="4.00" height="1" fill="#ec2f6e"/><rect x="4.67" y="8.00" width="4.00" height="1" fill="#f8f8f2"/><rect x="9.34" y="8.00" width="2.67" height="1" fill="#ec2f6e"/><rect x="12.67" y="8.00" width="10.67" height="1" fill="#e6db74"/><rect x="0.00" y="9.33" width="4.00" height="1" fill="#ec2f6e"/><rect x="4.67" y="9.33" width="2.00" height="1" fill="#f8f8f2"/><rect x="7.34" y="9.33" width="2.67" height="1" fill="#ec2f6e"/><rect x="10.67" y="9.33" width="10.01" height="1" fill="#e6db74"/><rect x="0.00" y="10.66" width="4.00" height="1" fill="#ec2f6e"/><rect x="4.67" y="10.66" width="10.67" height="1" fill="#f8f8f2"/><rect x="16.01" y="10.66" width="2.67" height="1" fill="#ec2f6e"/><rect x="19.34" y="10.66" width="11.34" height="1" fill="#e6db74"/><rect x="0.00" y="12.00" width="4.00" height="1" fill="#ec2f6e"/><rect x="4.67" y="12.00" width="5.34" height="1" fill="#f8f8f2"/><rect x="10.67" y="12.00" width="2.67" height="1" fill="#ec2f6e"/><rect x="14.01" y="12.00" width="14.01" height="1" fill="#e6db74"/><rect x="0.00" y="13.33" width="4.00" height="1" fill="#ec2f6e"/><rect x="4.67" y="13.33" width="5.34" height="1" fill="#f8f8f2"/><rect x="10.67" y="13.33" width="2.67" height="1" fill="#ec2f6e"/><rect x="14.01" y="13.33" width="7.34" height="1" fill="#e6db74"/><rect x="0.00" y="14.66" width="4.00" height="1" fill="#ec2f6e"/><rect x="4.67" y="14.66" width="4.67" height="1" fill="#f8f8f2"/><rect x="10.00" y="14.66" width="2.67" height="1" fill="#ec2f6e"/><rect x="13.34" y="14.66" width="15.34" height="1" fill="#e6db74"/><rect x="0.00" y="16.00" width="4.00" height="1" fill="#ec2f6e"/><rect x="4.67" y="16.00" width="4.67" height="1" fill="#f8f8f2"/><rect x="10.00" y="16.00" width="2.67" height="1" fill="#ec2f6e"/><rect x="13.34" y="16.00" width="8.67" height="1" fill="#e6db74"/><rect x="0.00" y="18.66" width="3.33" height="1" fill="#66d9ef"/><rect x="4.00" y="18.66" width="4.00" height="1" fill="#f8f8f2"/><rect x="8.67" y="18.66" width="0.67" height="1" fill="#ec2f6e"/><rect x="10.00" y="18.66" width="5.34" height="1" fill="#f8f8f2"/><rect x="0.00" y="20.00" width="3.33" height="1" fill="#66d9ef"/><rect x="4.00" y="20.00" width="4.67" height="1" fill="#f8f8f2"/><rect x="9.34" y="20.00" width="0.67" height="1" fill="#ec2f6e"/><rect x="10.67" y="20.00" width="13.34" height="1" fill="#e6db74"/><rect x="0.00" y="22.66" width="3.33" height="1" fill="#66d9ef"/><rect x="4.00" y="22.66" width="7.34" height="1" fill="#a4dc34"/><rect x="12.01" y="22.66" width="4.67" height="1" fill="#66d9ef"/><rect x="17.34" y="22.66" width="6.00" height="1" fill="#a4dc34"/><rect x="24.01" y="22.66" width="0.67" height="1" fill="#f8f8f2"/><rect x="1.33" y="23.99" width="6.67" height="1" fill="#a4dc34"/><rect x="8.00" y="23.99" width="1.33" height="1" fill="#f8f8f2"/><rect x="10.01" y="23.99" width="0.67" height="1" fill="#f8f8f2"/><rect x="2.67" y="25.33" width="5.34" height="1" fill="#f8f8f2"/><rect x="8.00" y="25.33" width="0.67" height="1" fill="#f8f8f2"/><rect x="9.34" y="25.33" width="8.67" height="1" fill="#ae81ff"/><rect x="2.67" y="26.66" width="3.33" height="1" fill="#66d9ef"/><rect x="6.67" y="26.66" width="6.00" height="1" fill="#f8f8f2"/><rect x="13.34" y="26.66" width="0.67" height="1" fill="#ec2f6e"/><rect x="14.67" y="26.66" width="16.68" height="1" fill="#f8f8f2"/><rect x="2.67" y="27.99" width="2.67" height="1" fill="#f69f32"/><rect x="5.34" y="27.99" width="0.67" height="1" fill="#f8f8f2"/><rect x="6.00" y="27.99" width="4.67" height="1" fill="#a4dc34"/><rect x="10.67" y="27.99" width="0.67" height="1" fill="#f8f8f2"/><rect x="11.34" y="27.99" width="10.67" height="1" fill="#f8f8f2"/><rect x="22.01" y="27.99" width="1.33" height="1" fill="#f8f8f2"/><rect x="2.67" y="29.33" width="2.67" height="1" fill="#f69f32"/><rect x="5.34" y="29.33" width="0.67" height="1" fill="#f8f8f2"/><rect x="6.00" y="29.33" width="2.67" height="1" fill="#a4dc34"/><rect x="8.67" y="29.33" width="0.67" height="1" fill="#f8f8f2"/><rect x="9.34" y="29.33" width="4.67" height="1" fill="#f8f8f2"/><rect x="14.01" y="29.33" width="1.33" height="1" fill="#f8f8f2"/><rect x="2.67" y="30.66" width="2.67" height="1" fill="#f69f32"/><rect x="5.34" y="30.66" width="0.67" height="1" fill="#f8f8f2"/><rect x="6.00" y="30.66" width="4.00" height="1" fill="#a4dc34"/><rect x="10.00" y="30.66" width="0.67" height="1" fill="#f8f8f2"/><rect x="10.67" y="30.66" width="4.00" height="1" fill="#f8f8f2"/><rect x="14.67" y="30.66" width="1.33" height="1" fill="#f8f8f2"/><rect x="2.67" y="31.99" width="1.33" height="1" fill="#ec2f6e"/><rect x="4.67" y="31.99" width="0.67" height="1" fill="#f8f8f2"/><rect x="5.34" y="31.99" width="8.67" height="1" fill="#f8f8f2"/><rect x="14.01" y="31.99" width="0.67" height="1" fill="#f8f8f2"/><rect x="15.34" y="31.99" width="0.67" height="1" fill="#f8f8f2"/><rect x="4.00" y="33.32" width="2.67" height="1" fill="#f8f8f2"/><rect x="6.67" y="33.32" width="0.67" height="1" fill="#f8f8f2"/><rect x="8.00" y="33.32" width="8.67" height="1" fill="#f8f8f2"/><rect x="1.33" y="34.66" width="0.67" height="1" fill="#f8f8f2"/><rect x="1.33" y="37.32" width="8.67" height="1" fill="#a4dc34"/><rect x="10.01" y="37.32" width="1.33" height="1" fill="#f8f8f2"/><rect x="12.01" y="37.32" width="0.67" height="1" fill="#f8f8f2"/><rect x="2.67" y="38.66" width="7.34" height="1" fill="#f8f8f2"/><rect x="10.00" y="38.66" width="0.67" height="1" fill="#f8f8f2"/><rect x="11.34" y="38.66" width="8.67" height="1" fill="#ae81ff"/><rect x="2.67" y="39.99" width="3.33" height="1" fill="#66d9ef"/><rect x="6.67" y="39.99" width="6.00" height="1" fill="#f8f8f2"/><rect x="13.34" y="39.99" width="0.67" height="1" fill="#ec2f6e"/><rect x="14.67" y="39.99" width="6.67" height="1" fill="#f8f8f2"/><rect x="2.67" y="41.32" width="1.33" height="1" fill="#ec2f6e"/><rect x="4.67" y="41.32" width="0.67" height="1" fill="#f8f8f2"/><rect x="5.34" y="41.32" width="2.67" height="1" fill="#f8f8f2"/><rect x="8.00" y="41.32" width="0.67" height="1" fill="#f8f8f2"/><rect x="9.34" y="41.32" width="0.67" height="1" fill="#f8f8f2"/><rect x="4.00" y="42.66" width="6.00" height="1" fill="#f8f8f2"/><rect x="10.00" y="42.66" width="0.67" height="1" fill="#f8f8f2"/><rect x="11.34" y="42.66" width="10.01" height="1" fill="#f8f8f2"/><rect x="4.00" y="43.99" width="3.33" height="1" fill="#66d9ef"/><rect x="8.00" y="43.99" width="4.67" height="1" fill="#f8f8f2"/><rect x="13.34" y="43.99" width="0.67" height="1" fill="#ec2f6e"/><rect x="14.67" y="43.99" width="10.67" height="1" fill="#f8f8f2"/><rect x="4.00" y="45.32" width="2.67" height="1" fill="#f69f32"/><rect x="6.67" y="45.32" width="0.67" height="1" fill="#f8f8f2"/><rect x="7.34" y="45.32" width="2.67" height="1" fill="#a4dc34"/><rect x="10.00" y="45.32" width="0.67" height="1" fill="#f8f8f2"/><rect x="10.67" y="45.32" width="6.00" height="1" fill="#f8f8f2"/><rect x="16.67" y="45.32" width="1.33" height="1" fill="#f8f8f2"/><rect x="4.00" y="46.66" width="1.33" height="1" fill="#ec2f6e"/><rect x="6.00" y="46.66" width="0.67" height="1" fill="#f8f8f2"/><rect x="6.67" y="46.66" width="6.00" height="1" fill="#f8f8f2"/><rect x="12.67" y="46.66" width="0.67" height="1" fill="#f8f8f2"/><rect x="14.01" y="46.66" width="0.67" height="1" fill="#f8f8f2"/><rect x="5.34" y="47.99" width="4.67" height="1" fill="#f8f8f2"/><rect x="10.01" y="47.99" width="0.67" height="1" fill="#f8f8f2"/><rect x="11.34" y="47.99" width="4.00" height="1" fill="#ae81ff"/><rect x="1.33" y="49.32" width="0.67" height="1" fill="#f8f8f2"/><rect x="1.33" y="51.99" width="8.67" height="1" fill="#a4dc34"/><rect x="10.01" y="51.99" width="1.33" height="1" fill="#f8f8f2"/><rect x="12.01" y="51.99" width="0.67" height="1" fill="#f8f8f2"/><rect x="2.67" y="53.32" width="3.33" height="1" fill="#66d9ef"/><rect x="6.67" y="53.32" width="5.34" height="1" fill="#f8f8f2"/><rect x="12.67" y="53.32" width="0.67" height="1" fill="#ec2f6e"/><rect x="14.01" y="53.32" width="8.67" height="1" fill="#f8f8f2"/><rect x="2.67" y="54.65" width="3.33" height="1" fill="#f8f8f2"/><rect x="6.00" y="54.65" width="0.67" height="1" fill="#f8f8f2"/><rect x="7.34" y="54.65" width="9.34" height="1" fill="#e6db74"/><rect x="2.67" y="55.99" width="1.33" height="1" fill="#ec2f6e"/><rect x="4.67" y="55.99" width="0.67" height="1" fill="#f8f8f2"/><rect x="5.34" y="55.99" width="4.00" height="1" fill="#f8f8f2"/><rect x="9.34" y="55.99" width="0.67" height="1" fill="#f8f8f2"/><rect x="10.67" y="55.99" width="0.67" height="1" fill="#f8f8f2"/><rect x="2.67" y="57.32" width="0.67" height="1" fill="#f8f8f2"/><rect x="2.67" y="58.65" width="3.33" height="1" fill="#66d9ef"/><rect x="6.67" y="58.65" width="4.00" height="1" fill="#f8f8f2"/><rect x="11.34" y="58.65" width="0.67" height="1" fill="#ec2f6e"/><rect x="12.67" y="58.65" width="6.00" height="1" fill="#f8f8f2"/><rect x="2.67" y="59.98" width="2.67" height="1" fill="#f69f32"/><rect x="5.34" y="59.98" width="0.67" height="1" fill="#f8f8f2"/><rect x="6.00" y="59.98" width="8.00" height="1" fill="#a4dc34"/><rect x="14.01" y="59.98" width="0.67" height="1" fill="#f8f8f2"/><rect x="14.67" y="59.98" width="2.00" height="1" fill="#f8f8f2"/><rect x="16.67" y="59.98" width="1.33" height="1" fill="#f8f8f2"/><rect x="2.67" y="61.32" width="2.67" height="1" fill="#f69f32"/><rect x="5.34" y="61.32" width="0.67" height="1" fill="#f8f8f2"/><rect x="6.00" y="61.32" width="6.00" height="1" fill="#a4dc34"/><rect x="12.01" y="61.32" width="0.67" height="1" fill="#f8f8f2"/><rect x="12.67" y="61.32" width="4.00" height="1" fill="#f8f8f2"/><rect x="16.67" y="61.32" width="1.33" height="1" fill="#f8f8f2"/><rect x="2.67" y="62.65" width="1.33" height="1" fill="#ec2f6e"/><rect x="4.67" y="62.65" width="0.67" height="1" fill="#f8f8f2"/><rect x="5.34" y="62.65" width="4.00" height="1" fill="#f8f8f2"/><rect x="9.34" y="62.65" width="0.67" height="1" fill="#f8f8f2"/><rect x="10.67" y="62.65" width="0.67" height="1" fill="#f8f8f2"/><rect x="4.00" y="63.98" width="5.34" height="1" fill="#f8f8f2"/><rect x="9.34" y="63.98" width="0.67" height="1" fill="#f8f8f2"/><rect x="10.67" y="63.98" width="12.01" height="1" fill="#ae81ff"/><rect x="4.00" y="65.32" width="3.33" height="1" fill="#f8f8f2"/><rect x="7.34" y="65.32" width="0.67" height="1" fill="#f8f8f2"/><rect x="8.67" y="65.32" width="13.34" height="1" fill="#a4dc34"/><rect x="4.00" y="66.65" width="1.33" height="1" fill="#ec2f6e"/><rect x="6.00" y="66.65" width="0.67" height="1" fill="#f8f8f2"/><rect x="6.67" y="66.65" width="10.01" height="1" fill="#f8f8f2"/><rect x="16.67" y="66.65" width="0.67" height="1" fill="#f8f8f2"/><rect x="18.01" y="66.65" width="0.67" height="1" fill="#f8f8f2"/><rect x="1.33" y="67.98" width="0.67" height="1" fill="#f8f8f2"/><rect x="1.33" y="70.65" width="10.01" height="1" fill="#a4dc34"/><rect x="11.34" y="70.65" width="1.33" height="1" fill="#f8f8f2"/><rect x="13.34" y="70.65" width="0.67" height="1" fill="#f8f8f2"/><rect x="2.67" y="71.98" width="4.00" height="1" fill="#f8f8f2"/><rect x="6.67" y="71.98" width="0.67" height="1" fill="#f8f8f2"/><rect x="8.00" y="71.98" width="2.67" height="1" fill="#f8f8f2"/><rect x="2.67" y="73.31" width="6.00" height="1" fill="#f8f8f2"/><rect x="8.67" y="73.31" width="0.67" height="1" fill="#f8f8f2"/><rect x="10.00" y="73.31" width="6.00" height="1" fill="#ae81ff"/><rect x="2.67" y="74.65" width="4.00" height="1" fill="#f8f8f2"/><rect x="6.67" y="74.65" width="0.67" height="1" fill="#f8f8f2"/><rect x="8.00" y="74.65" width="10.67" height="1" fill="#f8f8f2"/><rect x="2.67" y="75.98" width="1.33" height="1" fill="#ec2f6e"/><rect x="4.67" y="75.98" width="0.67" height="1" fill="#f8f8f2"/><rect x="5.34" y="75.98" width="10.01" height="1" fill="#f8f8f2"/><rect x="15.34" y="75.98" width="0.67" height="1" fill="#f8f8f2"/><rect x="16.67" y="75.98" width="0.67" height="1" fill="#f8f8f2"/><rect x="4.00" y="77.31" width="1.33" height="1" fill="#ec2f6e"/><rect x="6.00" y="77.31" width="0.67" height="1" fill="#f8f8f2"/><rect x="6.67" y="77.31" width="11.34" height="1" fill="#f8f8f2"/><rect x="18.01" y="77.31" width="0.67" height="1" fill="#f8f8f2"/><rect x="19.34" y="77.31" width="0.67" height="1" fill="#f8f8f2"/><rect x="4.00" y="78.65" width="0.67" height="1" fill="#f8f8f2"/><rect x="4.00" y="79.98" width="3.33" height="1" fill="#66d9ef"/><rect x="8.00" y="79.98" width="5.34" height="1" fill="#f8f8f2"/><rect x="14.01" y="79.98" width="0.67" height="1" fill="#ec2f6e"/><rect x="15.34" y="79.98" width="6.67" height="1" fill="#f8f8f2"/><rect x="4.00" y="81.31" width="7.34" height="1" fill="#f8f8f2"/><rect x="11.34" y="81.31" width="0.67" height="1" fill="#f8f8f2"/><rect x="12.67" y="81.31" width="12.01" height="1" fill="#e6db74"/><rect x="1.33" y="82.65" width="0.67" height="1" fill="#f8f8f2"/><rect x="1.33" y="85.31" width="8.00" height="1" fill="#a4dc34"/><rect x="9.34" y="85.31" width="1.33" height="1" fill="#f8f8f2"/><rect x="11.34" y="85.31" width="0.67" height="1" fill="#f8f8f2"/><rect x="2.67" y="86.64" width="2.67" height="1" fill="#f69f32"/><rect x="5.34" y="86.64" width="0.67" height="1" fill="#f8f8f2"/><rect x="6.00" y="86.64" width="6.67" height="1" fill="#a4dc34"/><rect x="12.67" y="86.64" width="0.67" height="1" fill="#f8f8f2"/><rect x="13.34" y="86.64" width="10.67" height="1" fill="#f8f8f2"/><rect x="24.01" y="86.64" width="1.33" height="1" fill="#f8f8f2"/><rect x="2.67" y="87.98" width="1.33" height="1" fill="#ec2f6e"/><rect x="4.67" y="87.98" width="0.67" height="1" fill="#f8f8f2"/><rect x="5.34" y="87.98" width="10.67" height="1" fill="#f8f8f2"/><rect x="16.01" y="87.98" width="0.67" height="1" fill="#f8f8f2"/><rect x="17.34" y="87.98" width="0.67" height="1" fill="#f8f8f2"/><rect x="4.00" y="89.31" width="8.00" height="1" fill="#f8f8f2"/><rect x="12.01" y="89.31" width="0.67" height="1" fill="#f8f8f2"/><rect x="13.34" y="89.31" width="5.34" height="1" fill="#a4dc34"/><rect x="4.00" y="90.64" width="4.00" height="1" fill="#f8f8f2"/><rect x="8.00" y="90.64" width="0.67" height="1" fill="#f8f8f2"/><rect x="9.34" y="90.64" width="3.33" height="1" fill="#a4dc34"/><rect x="2.67" y="91.98" width="0.67" height="1" fill="#f8f8f2"/><rect x="2.67" y="93.31" width="8.00" height="1" fill="#f8f8f2"/><rect x="10.67" y="93.31" width="0.67" height="1" fill="#f8f8f2"/><rect x="12.01" y="93.31" width="9.34" height="1" fill="#f8f8f2"/><rect x="2.67" y="94.64" width="6.00" height="1" fill="#f8f8f2"/><rect x="8.67" y="94.64" width="0.67" height="1" fill="#f8f8f2"/><rect x="10.00" y="94.64" width="2.67" height="1" fill="#e6db74"/><rect x="2.67" y="95.98" width="2.67" height="1" fill="#f69f32"/><rect x="5.34" y="95.98" width="0.67" height="1" fill="#f8f8f2"/><rect x="6.00" y="95.98" width="9.34" height="1" fill="#a4dc34"/><rect x="15.34" y="95.98" width="0.67" height="1" fill="#f8f8f2"/><rect x="16.01" y="95.98" width="4.00" height="1" fill="#f8f8f2"/><rect x="20.01" y="95.98" width="1.33" height="1" fill="#f8f8f2"/><rect x="2.67" y="97.31" width="5.34" height="1" fill="#f8f8f2"/><rect x="8.00" y="97.31" width="0.67" height="1" fill="#f8f8f2"/><rect x="9.34" y="97.31" width="8.00" height="1" fill="#e6db74"/><rect x="2.67" y="98.64" width="2.67" height="1" fill="#f8f8f2"/><rect x="5.34" y="98.64" width="0.67" height="1" fill="#f8f8f2"/><rect x="6.67" y="98.64" width="12.01" height="1" fill="#e6db74"/><rect x="2.67" y="99.97" width="2.67" height="1" fill="#f69f32"/><rect x="5.34" y="99.97" width="0.67" height="1" fill="#f8f8f2"/><rect x="6.00" y="99.97" width="5.34" height="1" fill="#a4dc34"/><rect x="11.34" y="99.97" width="0.67" height="1" fill="#f8f8f2"/><rect x="12.01" y="99.97" width="6.00" height="1" fill="#f8f8f2"/><rect x="18.01" y="99.97" width="1.33" height="1" fill="#f8f8f2"/><rect x="1.33" y="101.31" width="0.67" height="1" fill="#f8f8f2"/><rect x="1.33" y="103.97" width="10.67" height="1" fill="#a4dc34"/><rect x="12.01" y="103.97" width="1.33" height="1" fill="#f8f8f2"/><rect x="14.01" y="103.97" width="0.67" height="1" fill="#f8f8f2"/><rect x="2.67" y="105.31" width="6.00" height="1" fill="#f8f8f2"/><rect x="8.67" y="105.31" width="0.67" height="1" fill="#f8f8f2"/><rect x="10.00" y="105.31" width="9.34" height="1" fill="#e6db74"/><rect x="2.67" y="106.64" width="6.67" height="1" fill="#f8f8f2"/><rect x="9.34" y="106.64" width="0.67" height="1" fill="#f8f8f2"/><rect x="10.67" y="106.64" width="9.34" height="1" fill="#ae81ff"/><rect x="2.67" y="107.97" width="7.34" height="1" fill="#f8f8f2"/><rect x="10.00" y="107.97" width="0.67" height="1" fill="#f8f8f2"/><rect x="11.34" y="107.97" width="9.34" height="1" fill="#e6db74"/><rect x="2.67" y="109.31" width="3.33" height="1" fill="#66d9ef"/><rect x="6.67" y="109.31" width="5.34" height="1" fill="#f8f8f2"/><rect x="12.67" y="109.31" width="0.67" height="1" fill="#ec2f6e"/><rect x="14.01" y="109.31" width="6.67" height="1" fill="#f8f8f2"/><rect x="2.67" y="110.64" width="2.67" height="1" fill="#f69f32"/><rect x="5.34" y="110.64" width="0.67" height="1" fill="#f8f8f2"/><rect x="6.00" y="110.64" width="6.00" height="1" fill="#a4dc34"/><rect x="12.01" y="110.64" width="0.67" height="1" fill="#f8f8f2"/><rect x="12.67" y="110.64" width="10.67" height="1" fill="#f8f8f2"/><rect x="23.34" y="110.64" width="1.33" height="1" fill="#f8f8f2"/><rect x="2.67" y="111.97" width="5.34" height="1" fill="#f8f8f2"/><rect x="8.00" y="111.97" width="0.67" height="1" fill="#f8f8f2"/><rect x="9.34" y="111.97" width="3.33" height="1" fill="#a4dc34"/><rect x="2.67" y="113.31" width="1.33" height="1" fill="#ec2f6e"/><rect x="4.67" y="113.31" width="0.67" height="1" fill="#f8f8f2"/><rect x="5.34" y="113.31" width="13.34" height="1" fill="#f8f8f2"/><rect x="18.68" y="113.31" width="0.67" height="1" fill="#f8f8f2"/><rect x="20.01" y="113.31" width="0.67" height="1" fill="#f8f8f2"/><rect x="4.00" y="114.64" width="6.67" height="1" fill="#f8f8f2"/><rect x="10.67" y="114.64" width="0.67" height="1" fill="#f8f8f2"/><rect x="12.01" y="114.64" width="8.00" height="1" fill="#e6db74"/><rect x="1.33" y="115.97" width="0.67" height="1" fill="#f8f8f2"/><rect x="1.33" y="118.64" width="7.34" height="1" fill="#a4dc34"/><rect x="8.67" y="118.64" width="1.33" height="1" fill="#f8f8f2"/><rect x="10.67" y="118.64" width="0.67" height="1" fill="#f8f8f2"/><rect x="2.67" y="119.97" width="1.33" height="1" fill="#ec2f6e"/><rect x="4.67" y="119.97" width="0.67" height="1" fill="#f8f8f2"/><rect x="5.34" y="119.97" width="12.01" height="1" fill="#f8f8f2"/><rect x="17.34" y="119.97" width="0.67" height="1" fill="#f8f8f2"/><rect x="18.68" y="119.97" width="0.67" height="1" fill="#f8f8f2"/><rect x="4.00" y="121.30" width="4.00" height="1" fill="#f8f8f2"/><rect x="8.00" y="121.30" width="0.67" height="1" fill="#f8f8f2"/><rect x="9.34" y="121.30" width="6.67" height="1" fill="#ae81ff"/><rect x="4.00" y="122.64" width="2.67" height="1" fill="#f8f8f2"/><rect x="6.67" y="122.64" width="0.67" height="1" fill="#f8f8f2"/><rect x="8.00" y="122.64" width="12.01" height="1" fill="#ae81ff"/><rect x="4.00" y="123.97" width="1.33" height="1" fill="#ec2f6e"/><rect x="6.00" y="123.97" width="0.67" height="1" fill="#f8f8f2"/><rect x="6.67" y="123.97" width="5.34" height="1" fill="#f8f8f2"/><rect x="12.01" y="123.97" width="0.67" height="1" fill="#f8f8f2"/><rect x="13.34" y="123.97" width="0.67" height="1" fill="#f8f8f2"/><rect x="1.33" y="125.30" width="0.67" height="1" fill="#f8f8f2"/><rect x="1.33" y="127.97" width="8.67" height="1" fill="#a4dc34"/><rect x="10.01" y="127.97" width="1.33" height="1" fill="#f8f8f2"/><rect x="12.01" y="127.97" width="0.67" height="1" fill="#f8f8f2"/><rect x="2.67" y="129.30" width="7.34" height="1" fill="#f8f8f2"/><rect x="10.00" y="129.30" width="0.67" height="1" fill="#f8f8f2"/><rect x="11.34" y="129.30" width="6.00" height="1" fill="#f8f8f2"/><rect x="2.67" y="130.63" width="2.67" height="1" fill="#f69f32"/><rect x="5.34" y="130.63" width="0.67" height="1" fill="#f8f8f2"/><rect x="6.00" y="130.63" width="6.00" height="1" fill="#a4dc34"/><rect x="12.01" y="130.63" width="0.67" height="1" fill="#f8f8f2"/><rect x="12.67" y="130.63" width="5.34" height="1" fill="#f8f8f2"/><rect x="18.01" y="130.63" width="1.33" height="1" fill="#f8f8f2"/><rect x="2.67" y="131.97" width="3.33" height="1" fill="#f8f8f2"/><rect x="6.00" y="131.97" width="0.67" height="1" fill="#f8f8f2"/><rect x="7.34" y="131.97" width="6.00" height="1" fill="#ae81ff"/><rect x="2.67" y="133.30" width="6.00" height="1" fill="#f8f8f2"/><rect x="8.67" y="133.30" width="0.67" height="1" fill="#f8f8f2"/><rect x="10.00" y="133.30" width="2.00" height="1" fill="#e6db74"/><rect x="2.67" y="134.63" width="2.67" height="1" fill="#f69f32"/><rect x="5.34" y="134.63" width="0.67" height="1" fill="#f8f8f2"/><rect x="6.00" y="134.63" width="5.34" height="1" fill="#a4dc34"/><rect x="11.34" y="134.63" width="0.67" height="1" fill="#f8f8f2"/><rect x="12.01" y="134.63" width="10.01" height="1" fill="#f8f8f2"/><rect x="22.01" y="134.63" width="1.33" height="1" fill="#f8f8f2"/><rect x="1.33" y="135.97" width="0.67" height="1" fill="#f8f8f2"/><rect x="1.33" y="138.63" width="6.00" height="1" fill="#a4dc34"/><rect x="7.34" y="138.63" width="1.33" height="1" fill="#f8f8f2"/><rect x="9.34" y="138.63" width="0.67" height="1" fill="#f8f8f2"/><rect x="2.67" y="139.97" width="8.00" height="1" fill="#f8f8f2"/><rect x="10.67" y="139.97" width="0.67" height="1" fill="#f8f8f2"/><rect x="12.01" y="139.97" width="9.34" height="1" fill="#f8f8f2"/><rect x="2.67" y="141.30" width="3.33" height="1" fill="#66d9ef"/><rect x="6.67" y="141.30" width="4.00" height="1" fill="#f8f8f2"/><rect x="11.34" y="141.30" width="0.67" height="1" fill="#ec2f6e"/><rect x="12.67" y="141.30" width="5.34" height="1" fill="#f8f8f2"/><rect x="2.67" y="142.63" width="2.67" height="1" fill="#f69f32"/><rect x="5.34" y="142.63" width="0.67" height="1" fill="#f8f8f2"/><rect x="6.00" y="142.63" width="8.00" height="1" fill="#a4dc34"/><rect x="14.01" y="142.63" width="0.67" height="1" fill="#f8f8f2"/><rect x="14.67" y="142.63" width="4.67" height="1" fill="#f8f8f2"/><rect x="19.34" y="142.63" width="1.33" height="1" fill="#f8f8f2"/><rect x="2.67" y="143.96" width="5.34" height="1" fill="#f8f8f2"/><rect x="8.00" y="143.96" width="0.67" height="1" fill="#f8f8f2"/><rect x="9.34" y="143.96" width="9.34" height="1" fill="#ae81ff"/><rect x="2.67" y="145.30" width="2.67" height="1" fill="#f69f32"/><rect x="5.34" y="145.30" width="0.67" height="1" fill="#f8f8f2"/><rect x="6.00" y="145.30" width="8.67" height="1" fill="#a4dc34"/><rect x="14.67" y="145.30" width="0.67" height="1" fill="#f8f8f2"/><rect x="15.34" y="145.30" width="8.00" height="1" fill="#f8f8f2"/><rect x="23.34" y="145.30" width="1.33" height="1" fill="#f8f8f2"/><rect x="2.67" y="146.63" width="3.33" height="1" fill="#66d9ef"/><rect x="6.67" y="146.63" width="4.67" height="1" fill="#f8f8f2"/><rect x="12.01" y="146.63" width="0.67" height="1" fill="#ec2f6e"/><rect x="13.34" y="146.63" width="6.00" height="1" fill="#f8f8f2"/><rect x="2.67" y="147.96" width="1.33" height="1" fill="#ec2f6e"/><rect x="4.67" y="147.96" width="0.67" height="1" fill="#f8f8f2"/><rect x="5.34" y="147.96" width="10.67" height="1" fill="#f8f8f2"/><rect x="16.01" y="147.96" width="0.67" height="1" fill="#f8f8f2"/><rect x="17.34" y="147.96" width="0.67" height="1" fill="#f8f8f2"/><rect x="4.00" y="150.63" width="4.00" height="1" fill="#f8f8f2"/><rect x="8.00" y="150.63" width="0.67" height="1" fill="#f8f8f2"/><rect x="9.34" y="150.63" width="3.33" height="1" fill="#e6db74"/><rect x="4.00" y="151.96" width="2.67" height="1" fill="#f8f8f2"/><rect x="6.67" y="151.96" width="0.67" height="1" fill="#f8f8f2"/><rect x="8.00" y="151.96" width="10.01" height="1" fill="#f8f8f2"/><rect x="1.33" y="153.29" width="0.67" height="1" fill="#f8f8f2"/><rect x="1.33" y="155.96" width="11.34" height="1" fill="#a4dc34"/><rect x="12.67" y="155.96" width="1.33" height="1" fill="#f8f8f2"/><rect x="14.67" y="155.96" width="0.67" height="1" fill="#f8f8f2"/><rect x="2.67" y="157.29" width="8.00" height="1" fill="#f8f8f2"/><rect x="10.67" y="157.29" width="0.67" height="1" fill="#f8f8f2"/><rect x="12.01" y="157.29" width="4.67" height="1" fill="#e6db74"/><rect x="2.67" y="158.63" width="6.67" height="1" fill="#f8f8f2"/><rect x="9.34" y="158.63" width="0.67" height="1" fill="#f8f8f2"/><rect x="10.67" y="158.63" width="10.67" height="1" fill="#a4dc34"/><rect x="2.67" y="159.96" width="7.34" height="1" fill="#f8f8f2"/><rect x="10.00" y="159.96" width="0.67" height="1" fill="#f8f8f2"/><rect x="11.34" y="159.96" width="8.00" height="1" fill="#a4dc34"/><rect x="2.67" y="161.29" width="6.67" height="1" fill="#f8f8f2"/><rect x="9.34" y="161.29" width="0.67" height="1" fill="#f8f8f2"/><rect x="10.67" y="161.29" width="10.01" height="1" fill="#ae81ff"/><rect x="2.67" y="163.96" width="2.67" height="1" fill="#f69f32"/><rect x="5.34" y="163.96" width="0.67" height="1" fill="#f8f8f2"/><rect x="6.00" y="163.96" width="5.34" height="1" fill="#a4dc34"/><rect x="11.34" y="163.96" width="0.67" height="1" fill="#f8f8f2"/><rect x="12.01" y="163.96" width="6.00" height="1" fill="#f8f8f2"/><rect x="18.01" y="163.96" width="1.33" height="1" fill="#f8f8f2"/><rect x="2.67" y="165.29" width="2.67" height="1" fill="#f69f32"/><rect x="5.34" y="165.29" width="0.67" height="1" fill="#f8f8f2"/><rect x="6.00" y="165.29" width="2.67" height="1" fill="#a4dc34"/><rect x="8.67" y="165.29" width="0.67" height="1" fill="#f8f8f2"/><rect x="9.34" y="165.29" width="4.67" height="1" fill="#f8f8f2"/><rect x="14.01" y="165.29" width="1.33" height="1" fill="#f8f8f2"/><rect x="2.67" y="166.62" width="5.34" height="1" fill="#f8f8f2"/><rect x="8.00" y="166.62" width="0.67" height="1" fill="#f8f8f2"/><rect x="9.34" y="166.62" width="12.01" height="1" fill="#e6db74"/><rect x="2.67" y="167.96" width="1.33" height="1" fill="#ec2f6e"/><rect x="4.67" y="167.96" width="0.67" height="1" fill="#f8f8f2"/><rect x="5.34" y="167.96" width="2.67" height="1" fill="#f8f8f2"/><rect x="8.00" y="167.96" width="0.67" height="1" fill="#f8f8f2"/><rect x="9.34" y="167.96" width="0.67" height="1" fill="#f8f8f2"/><rect x="1.33" y="169.29" width="0.67" height="1" fill="#f8f8f2"/><rect x="1.33" y="171.96" width="12.01" height="1" fill="#a4dc34"/><rect x="13.34" y="171.96" width="1.33" height="1" fill="#f8f8f2"/><rect x="15.34" y="171.96" width="0.67" height="1" fill="#f8f8f2"/><rect x="2.67" y="173.29" width="7.34" height="1" fill="#f8f8f2"/><rect x="10.00" y="173.29" width="0.67" height="1" fill="#f8f8f2"/><rect x="11.34" y="173.29" width="6.67" height="1" fill="#e6db74"/><rect x="2.67" y="174.62" width="1.33" height="1" fill="#ec2f6e"/><rect x="4.67" y="174.62" width="0.67" height="1" fill="#f8f8f2"/><rect x="5.34" y="174.62" width="5.34" height="1" fill="#f8f8f2"/><rect x="10.67" y="174.62" width="0.67" height="1" fill="#f8f8f2"/><rect x="12.01" y="174.62" width="0.67" height="1" fill="#f8f8f2"/><rect x="4.00" y="175.96" width="2.67" height="1" fill="#f8f8f2"/><rect x="6.67" y="175.96" width="0.67" height="1" fill="#f8f8f2"/><rect x="8.00" y="175.96" width="12.01" height="1" fill="#e6db74"/><rect x="2.67" y="177.29" width="0.67" height="1" fill="#f8f8f2"/><rect x="2.67" y="178.62" width="3.33" height="1" fill="#66d9ef"/><rect x="6.67" y="178.62" width="2.67" height="1" fill="#f8f8f2"/><rect x="10.00" y="178.62" width="0.67" height="1" fill="#ec2f6e"/><rect x="11.34" y="178.62" width="8.00" height="1" fill="#f8f8f2"/><rect x="1.33" y="179.95" width="0.67" height="1" fill="#f8f8f2"/><rect x="1.33" y="182.62" width="8.00" height="1" fill="#a4dc34"/><rect x="9.34" y="182.62" width="1.33" height="1" fill="#f8f8f2"/><rect x="11.34" y="182.62" width="0.67" height="1" fill="#f8f8f2"/><rect x="2.67" y="183.95" width="5.34" height="1" fill="#f8f8f2"/><rect x="8.00" y="183.95" width="0.67" height="1" fill="#f8f8f2"/><rect x="9.34" y="183.95" width="8.00" height="1" fill="#a4dc34"/><rect x="2.67" y="186.62" width="3.33" height="1" fill="#66d9ef"/><rect x="6.67" y="186.62" width="6.00" height="1" fill="#f8f8f2"/><rect x="13.34" y="186.62" width="0.67" height="1" fill="#ec2f6e"/><rect x="14.67" y="186.62" width="16.01" height="1" fill="#f8f8f2"/><rect x="2.67" y="187.95" width="3.33" height="1" fill="#f8f8f2"/><rect x="6.00" y="187.95" width="0.67" height="1" fill="#f8f8f2"/><rect x="7.34" y="187.95" width="2.00" height="1" fill="#ae81ff"/><rect x="2.67" y="189.29" width="2.67" height="1" fill="#f69f32"/><rect x="5.34" y="189.29" width="0.67" height="1" fill="#f8f8f2"/><rect x="6.00" y="189.29" width="8.00" height="1" fill="#a4dc34"/><rect x="14.01" y="189.29" width="0.67" height="1" fill="#f8f8f2"/><rect x="14.67" y="189.29" width="8.67" height="1" fill="#f8f8f2"/><rect x="23.34" y="189.29" width="1.33" height="1" fill="#f8f8f2"/><rect x="2.67" y="190.62" width="2.67" height="1" fill="#f69f32"/><rect x="5.34" y="190.62" width="0.67" height="1" fill="#f8f8f2"/><rect x="6.00" y="190.62" width="5.34" height="1" fill="#a4dc34"/><rect x="11.34" y="190.62" width="0.67" height="1" fill="#f8f8f2"/><rect x="12.01" y="190.62" width="8.67" height="1" fill="#f8f8f2"/><rect x="20.68" y="190.62" width="1.33" height="1" fill="#f8f8f2"/><rect x="2.67" y="191.95" width="3.33" height="1" fill="#66d9ef"/><rect x="6.67" y="191.95" width="4.67" height="1" fill="#f8f8f2"/><rect x="12.01" y="191.95" width="0.67" height="1" fill="#ec2f6e"/><rect x="13.34" y="191.95" width="10.67" height="1" fill="#f8f8f2"/><rect x="2.67" y="193.28" width="2.67" height="1" fill="#f69f32"/><rect x="5.34" y="193.28" width="0.67" height="1" fill="#f8f8f2"/><rect x="6.00" y="193.28" width="8.67" height="1" fill="#a4dc34"/><rect x="14.67" y="193.28" width="0.67" height="1" fill="#f8f8f2"/><rect x="15.34" y="193.28" width="2.67" height="1" fill="#f8f8f2"/><rect x="18.01" y="193.28" width="1.33" height="1" fill="#f8f8f2"/><rect x="2.67" y="194.62" width="1.33" height="1" fill="#ec2f6e"/><rect x="4.67" y="194.62" width="0.67" height="1" fill="#f8f8f2"/><rect x="5.34" y="194.62" width="8.00" height="1" fill="#f8f8f2"/><rect x="13.34" y="194.62" width="0.67" height="1" fill="#f8f8f2"/><rect x="14.67" y="194.62" width="0.67" height="1" fill="#f8f8f2"/><rect x="4.00" y="197.28" width="3.33" height="1" fill="#f8f8f2"/><rect x="7.34" y="197.28" width="0.67" height="1" fill="#f8f8f2"/><rect x="8.67" y="197.28" width="13.34" height="1" fill="#ae81ff"/><rect x="1.33" y="198.62" width="0.67" height="1" fill="#f8f8f2"/><rect x="1.33" y="201.28" width="9.34" height="1" fill="#a4dc34"/><rect x="10.67" y="201.28" width="1.33" height="1" fill="#f8f8f2"/><rect x="12.67" y="201.28" width="0.67" height="1" fill="#f8f8f2"/><rect x="2.67" y="202.62" width="6.67" height="1" fill="#f8f8f2"/><rect x="9.34" y="202.62" width="0.67" height="1" fill="#f8f8f2"/><rect x="10.67" y="202.62" width="12.01" height="1" fill="#a4dc34"/><rect x="2.67" y="203.95" width="3.33" height="1" fill="#66d9ef"/><rect x="6.67" y="203.95" width="6.00" height="1" fill="#f8f8f2"/><rect x="13.34" y="203.95" width="0.67" height="1" fill="#ec2f6e"/><rect x="14.67" y="203.95" width="7.34" height="1" fill="#f8f8f2"/><rect x="2.67" y="205.28" width="7.34" height="1" fill="#f8f8f2"/><rect x="10.00" y="205.28" width="0.67" height="1" fill="#f8f8f2"/><rect x="11.34" y="205.28" width="3.33" height="1" fill="#e6db74"/><rect x="2.67" y="206.62" width="6.67" height="1" fill="#f8f8f2"/><rect x="9.34" y="206.62" width="0.67" height="1" fill="#f8f8f2"/><rect x="10.67" y="206.62" width="8.00" height="1" fill="#a4dc34"/><rect x="1.33" y="207.95" width="0.67" height="1" fill="#f8f8f2"/><rect x="2.67" y="277.26" width="4.00" height="1" fill="#ec2f6e"/><rect x="7.34" y="277.26" width="2.67" height="1" fill="#ae81ff"/><rect x="10.00" y="277.26" width="0.67" height="1" fill="#f8f8f2"/><rect x="1.33" y="278.60" width="0.67" height="1" fill="#f8f8f2"/><rect x="1.33" y="279.93" width="4.00" height="1" fill="#ec2f6e"/><rect x="6.00" y="279.93" width="0.67" height="1" fill="#f8f8f2"/><rect x="4.00" y="281.26" width="4.00" height="1" fill="#a4dc34"/><rect x="8.00" y="281.26" width="0.67" height="1" fill="#ec2f6e"/><rect x="8.67" y="281.26" width="0.67" height="1" fill="#ec2f6e"/><rect x="9.34" y="281.26" width="6.00" height="1" fill="#f8f8f2"/><rect x="15.34" y="281.26" width="0.67" height="1" fill="#ec2f6e"/><rect x="4.00" y="282.60" width="8.00" height="1" fill="#a4dc34"/><rect x="12.01" y="282.60" width="0.67" height="1" fill="#ec2f6e"/><rect x="12.67" y="282.60" width="0.67" height="1" fill="#ec2f6e"/><rect x="13.34" y="282.60" width="12.67" height="1" fill="#f8f8f2"/><rect x="26.01" y="282.60" width="0.67" height="1" fill="#ec2f6e"/><rect x="4.00" y="283.93" width="8.00" height="1" fill="#a4dc34"/><rect x="12.01" y="283.93" width="0.67" height="1" fill="#ec2f6e"/><rect x="12.67" y="283.93" width="0.67" height="1" fill="#ec2f6e"/><rect x="13.34" y="283.93" width="5.34" height="1" fill="#f8f8f2"/><rect x="18.68" y="283.93" width="0.67" height="1" fill="#ec2f6e"/><rect x="4.00" y="285.26" width="8.67" height="1" fill="#a4dc34"/><rect x="12.67" y="285.26" width="0.67" height="1" fill="#ec2f6e"/><rect x="13.34" y="285.26" width="0.67" height="1" fill="#ec2f6e"/><rect x="14.01" y="285.26" width="3.33" height="1" fill="#f8f8f2"/><rect x="17.34" y="285.26" width="0.67" height="1" fill="#ec2f6e"/><rect x="2.67" y="286.59" width="4.67" height="1" fill="#a4dc34"/><rect x="7.34" y="286.59" width="0.67" height="1" fill="#ec2f6e"/><rect x="8.00" y="286.59" width="0.67" height="1" fill="#ec2f6e"/><rect x="8.67" y="286.59" width="8.00" height="1" fill="#f8f8f2"/><rect x="16.67" y="286.59" width="0.67" height="1" fill="#ec2f6e"/><rect x="2.67" y="287.93" width="3.33" height="1" fill="#a4dc34"/><rect x="6.00" y="287.93" width="0.67" height="1" fill="#ec2f6e"/><rect x="6.67" y="287.93" width="0.67" height="1" fill="#ec2f6e"/><rect x="7.34" y="287.93" width="2.67" height="1" fill="#f8f8f2"/><rect x="10.00" y="287.93" width="0.67" height="1" fill="#ec2f6e"/><rect x="4.00" y="289.26" width="6.67" height="1" fill="#a4dc34"/><rect x="10.67" y="289.26" width="0.67" height="1" fill="#ec2f6e"/><rect x="11.34" y="289.26" width="0.67" height="1" fill="#ec2f6e"/><rect x="12.01" y="289.26" width="4.00" height="1" fill="#f8f8f2"/><rect x="16.01" y="289.26" width="0.67" height="1" fill="#ec2f6e"/><rect x="4.00" y="290.59" width="7.34" height="1" fill="#a4dc34"/><rect x="11.34" y="290.59" width="0.67" height="1" fill="#ec2f6e"/><rect x="12.01" y="290.59" width="0.67" height="1" fill="#ec2f6e"/><rect x="12.67" y="290.59" width="3.33" height="1" fill="#f8f8f2"/><rect x="16.01" y="290.59" width="0.67" height="1" fill="#ec2f6e"/><rect x="2.67" y="291.93" width="3.33" height="1" fill="#a4dc34"/><rect x="6.00" y="291.93" width="0.67" height="1" fill="#ec2f6e"/><rect x="6.67" y="291.93" width="0.67" height="1" fill="#ec2f6e"/><rect x="7.34" y="291.93" width="7.34" height="1" fill="#f8f8f2"/><rect x="14.67" y="291.93" width="0.67" height="1" fill="#ec2f6e"/><rect x="5.34" y="293.26" width="9.34" height="1" fill="#a4dc34"/><rect x="14.67" y="293.26" width="0.67" height="1" fill="#ec2f6e"/><rect x="15.34" y="293.26" width="0.67" height="1" fill="#ec2f6e"/><rect x="16.01" y="293.26" width="4.67" height="1" fill="#f8f8f2"/><rect x="20.68" y="293.26" width="0.67" height="1" fill="#ec2f6e"/><rect x="5.34" y="294.59" width="4.00" height="1" fill="#a4dc34"/><rect x="9.34" y="294.59" width="0.67" height="1" fill="#ec2f6e"/><rect x="10.00" y="294.59" width="0.67" height="1" fill="#ec2f6e"/><rect x="10.67" y="294.59" width="8.67" height="1" fill="#f8f8f2"/><rect x="19.34" y="294.59" width="0.67" height="1" fill="#ec2f6e"/><rect x="5.34" y="295.93" width="7.34" height="1" fill="#a4dc34"/><rect x="12.67" y="295.93" width="0.67" height="1" fill="#ec2f6e"/><rect x="13.34" y="295.93" width="0.67" height="1" fill="#ec2f6e"/><rect x="14.01" y="295.93" width="5.34" height="1" fill="#f8f8f2"/><rect x="19.34" y="295.93" width="0.67" height="1" fill="#ec2f6e"/><rect x="2.67" y="297.26" width="8.67" height="1" fill="#a4dc34"/><rect x="11.34" y="297.26" width="0.67" height="1" fill="#ec2f6e"/><rect x="12.01" y="297.26" width="0.67" height="1" fill="#ec2f6e"/><rect x="12.67" y="297.26" width="6.00" height="1" fill="#f8f8f2"/><rect x="18.68" y="297.26" width="0.67" height="1" fill="#ec2f6e"/><rect x="4.00" y="298.59" width="4.00" height="1" fill="#a4dc34"/><rect x="8.00" y="298.59" width="0.67" height="1" fill="#ec2f6e"/><rect x="8.67" y="298.59" width="0.67" height="1" fill="#ec2f6e"/><rect x="9.34" y="298.59" width="4.00" height="1" fill="#f8f8f2"/><rect x="13.34" y="298.59" width="0.67" height="1" fill="#ec2f6e"/><rect x="5.34" y="299.93" width="4.67" height="1" fill="#a4dc34"/><rect x="10.01" y="299.93" width="0.67" height="1" fill="#ec2f6e"/><rect x="10.67" y="299.93" width="0.67" height="1" fill="#ec2f6e"/><rect x="11.34" y="299.93" width="3.33" height="1" fill="#f8f8f2"/><rect x="14.67" y="299.93" width="0.67" height="1" fill="#ec2f6e"/><rect x="1.33" y="301.26" width="1.33" height="1" fill="#f8f8f2"/><rect x="0.00" y="302.59" width="0.67" height="1" fill="#f8f8f2"/><rect x="0.00" y="305.26" width="4.00" height="1" fill="#ec2f6e"/><rect x="4.67" y="305.26" width="4.67" height="1" fill="#ec2f6e"/><rect x="10.00" y="305.26" width="12.01" height="1" fill="#f8f8f2"/><rect x="22.01" y="305.26" width="0.67" height="1" fill="#f8f8f2"/></svg>
<div style="position:absolute;left:1196px;top:136.6px;width:75px;height:1.1px;background:#8a2d33;"></div>
<div style="position:absolute;left:1196px;top:308.6px;width:75px;height:1.1px;background:#8a2d33;"></div>
<svg style="left:7px;top:688.5px;" width="8" height="9" viewBox="0 0 8 9"><path d="M1.2 3.6L3.3 5.6L1.2 7.9M6.8 0.7L4.3 3.2L6.8 5.9" fill="none" stroke="#ffffff" stroke-width="1.05"/></svg>
<svg style="left:27.8px;top:688.3px;" width="7" height="9" viewBox="0 0 7 9"><circle cx="1.6" cy="1.6" r="1.1" fill="none" stroke="#f0f0f0" stroke-width="0.9"/><circle cx="1.6" cy="7.4" r="1.1" fill="none" stroke="#f0f0f0" stroke-width="0.9"/><circle cx="5.4" cy="2.6" r="1.1" fill="none" stroke="#f0f0f0" stroke-width="0.9"/><path d="M1.6 2.7V6.3M5.4 3.7C5.4 5.5 1.6 5 1.6 6.3" fill="none" stroke="#f0f0f0" stroke-width="0.9"/></svg>
<svg style="left:75px;top:688.7px;" width="9" height="8" viewBox="0 0 9 8"><path d="M1 4A3.5 3.5 0 0 1 7.3 2M8 4A3.5 3.5 0 0 1 1.7 6" fill="none" stroke="#f0f0f0" stroke-width="1"/><path d="M7.6 0.3V2.4H5.5M1.4 7.7V5.6H3.5" fill="none" stroke="#f0f0f0" stroke-width="0.9"/></svg>
<svg style="left:96px;top:689px;" width="8" height="8" viewBox="0 0 8 8"><circle cx="4" cy="4" r="3.5" fill="none" stroke="#f0f0f0" stroke-width="0.85"/><path d="M2.3 2.3L5.7 5.7M5.7 2.3L2.3 5.7" stroke="#f0f0f0" stroke-width="0.85"/></svg>
<svg style="left:113px;top:688.8px;" width="9" height="8" viewBox="0 0 9 8"><path d="M4.5 0.6L8.5 7.5H0.5Z" fill="none" stroke="#f0f0f0" stroke-width="0.9"/><path d="M4.5 3V5.3M4.5 6V6.8" stroke="#f0f0f0" stroke-width="0.9"/></svg>
<svg style="left:230.7px;top:688.5px;" width="6.5" height="9" viewBox="0 0 6.5 9"><rect x="0" y="0" width="6.5" height="9" rx="0.8" fill="#d8d8d8"/><path d="M0 3H6.5M0 6H6.5" stroke="#414339" stroke-width="0.8"/></svg>
<svg style="left:1241px;top:688.3px;" width="10" height="10" viewBox="0 0 10 10"><path d="M3.2 0.8H9.4V5.6H6.6L5.4 6.8" fill="none" stroke="#f0f0f0" stroke-width="0.9"/><circle cx="3.6" cy="5" r="1.5" fill="none" stroke="#f0f0f0" stroke-width="0.9"/><path d="M0.8 9.6Q3.6 6 6.4 9.6" fill="none" stroke="#f0f0f0" stroke-width="0.9"/></svg>
<svg style="left:1262.2px;top:688.5px;" width="7.6" height="9" viewBox="0 0 7.6 9"><path d="M0.6 7.2H7L6.1 5.9V3.2A2.3 2.3 0 0 0 1.5 3.2V5.9Z" fill="none" stroke="#f0f0f0" stroke-width="1"/><path d="M2.8 8.4H4.8" stroke="#f0f0f0" stroke-width="1"/></svg>
<div style="position:absolute;left:100px;top:718.2px;width:102.5px;height:1.8px;background:#95cdec;"></div>
<div style="position:absolute;left:204.8px;top:718.2px;width:107.19999999999999px;height:1.8px;background:#95cdec;"></div>
<div style="position:absolute;left:315px;top:718.2px;width:102.5px;height:1.8px;background:#95cdec;"></div>
<div style="position:absolute;left:422.5px;top:718.2px;width:101.25px;height:1.8px;background:#95cdec;"></div>
<div style="position:absolute;left:530px;top:718.2px;width:101px;height:1.8px;background:#95cdec;"></div>
<svg style="left:6.3px;top:704.4px;" width="11" height="10.6" viewBox="0 0 11 10.6"><path d="M0 1.4L4.7 0.7V5H0ZM5.3 0.6L11 0V5H5.3ZM0 5.6H4.7V9.9L0 9.2ZM5.3 5.6H11V10.6L5.3 10Z" fill="#ffffff"/></svg>
<svg style="left:30.6px;top:704.3px;" width="11" height="11" viewBox="0 0 11 11"><circle cx="6.8" cy="4.2" r="3.5" fill="none" stroke="#ffffff" stroke-width="1"/><path d="M4.3 6.7L0.6 10.4" stroke="#ffffff" stroke-width="1"/></svg>
<svg style="left:55px;top:704.8px;" width="10" height="10" viewBox="0 0 10 10"><circle cx="5" cy="5" r="4.3" fill="none" stroke="#ffffff" stroke-width="1.2"/></svg>
<svg style="left:78px;top:704.5px;" width="11" height="11" viewBox="0 0 11 11"><rect x="0.8" y="2" width="6.5" height="6.5" fill="none" stroke="#ffffff" stroke-width="1"/><path d="M0 0.6H8M0 10H8M9.8 0V11" stroke="#ffffff" stroke-width="1"/></svg>
<svg style="left:103.8px;top:705px;" width="9.6" height="9.6" viewBox="0 0 24 24"><circle cx="12" cy="12" r="12" fill="#db4437"/><path d="M12 12L1.6 18A12 12 0 0 0 12 24Z" fill="#0f9d58"/><path d="M12 12L1.6 6A12 12 0 0 0 1.6 18Z" fill="#0f9d58"/><path d="M12 12H24A12 12 0 0 1 12 24Z" fill="#f4b400"/><circle cx="12" cy="12" r="5.5" fill="#ffffff"/><circle cx="12" cy="12" r="4.3" fill="#4285f4"/></svg>
<svg style="left:210px;top:704px;" width="12" height="12" viewBox="0 0 24 24"><path d="M17.5 1.5 L22.5 4 V20 L17.5 22.5 L7 13 L3 16 L1.5 15 V9 L3 8 L7 11 Z M17.5 7 L11 12 L17.5 17 Z" fill="#2a9be0"/></svg>
<svg style="left:318px;top:705px;" width="10" height="10" viewBox="0 0 24 24"><circle cx="12" cy="12" r="12" fill="#f2f2f2"/><path d="M7 6L9 17M12 5L14 18M5 10L18 8M6 15L19 13" stroke="#e01e5a" stroke-width="2.2"/><path d="M7 6L9 17M5 10L18 8" stroke="#36c5f0" stroke-width="2.2"/><path d="M12 5L14 18" stroke="#2eb67d" stroke-width="2.2"/></svg>
<svg style="left:425.5px;top:704.5px;" width="10" height="11" viewBox="0 0 10 11"><rect x="0.3" y="0.5" width="9.4" height="10" rx="1.5" fill="#f1c56a"/><path d="M1.8 4L5 7L8.2 4" fill="none" stroke="#a66a1a" stroke-width="0.9"/></svg>
<svg style="left:532.5px;top:704.5px;" width="10.5" height="11" viewBox="0 0 10.5 11"><path d="M5.25 0.8L9.7 9.8H0.8Z" fill="none" stroke="#3b82e8" stroke-width="2.4" stroke-linejoin="round"/></svg>
<svg style="left:1128px;top:706.5px;" width="8" height="5" viewBox="0 0 8 5"><path d="M0.5 4.5L4 1L7.5 4.5" fill="none" stroke="#ffffff" stroke-width="0.9"/></svg>
<svg style="left:1142.5px;top:704.5px;" width="10" height="11" viewBox="0 0 10 11"><rect x="0.3" y="0.5" width="9.4" height="10" rx="2" fill="#f1c56a"/><path d="M1.8 4L5 7L8.2 4" fill="none" stroke="#a66a1a" stroke-width="0.9"/></svg>
<svg style="left:1159px;top:704.5px;" width="10" height="11" viewBox="0 0 10 11"><circle cx="5" cy="5.5" r="5" fill="#0a0a0a"/><path d="M5 2L8 8H2Z" fill="none" stroke="#555" stroke-width="1"/></svg>
<svg style="left:1174px;top:705px;" width="12" height="10" viewBox="0 0 12 10"><rect x="4" y="1" width="7.5" height="5.5" fill="none" stroke="#ffffff" stroke-width="0.9"/><path d="M0 1H3M0 3H3M7.8 6.5V9M5.5 9.5H10M1.5 1V7" stroke="#ffffff" stroke-width="0.9"/></svg>
<svg style="left:1190px;top:705px;" width="12" height="10" viewBox="0 0 12 10"><path d="M0.5 3.5H3L6 0.8V9.2L3 6.5H0.5Z" fill="none" stroke="#ffffff" stroke-width="0.9"/><path d="M7.8 3.2Q8.6 5 7.8 6.8M9.4 2Q10.8 5 9.4 8M11 0.8Q12.8 5 11 9.2" fill="none" stroke="#ffffff" stroke-width="0.8"/></svg>
<svg style="left:1253px;top:704.5px;" width="10" height="11" viewBox="0 0 10 11"><path d="M0.5 0.5H9.5V7.5H5.5L3.5 10V7.5H0.5Z" fill="#f5f5f5"/></svg>
<div style="position:absolute;left:1276.5px;top:700px;width:1px;height:20px;background:#46525d;"></div>
</body></html>
